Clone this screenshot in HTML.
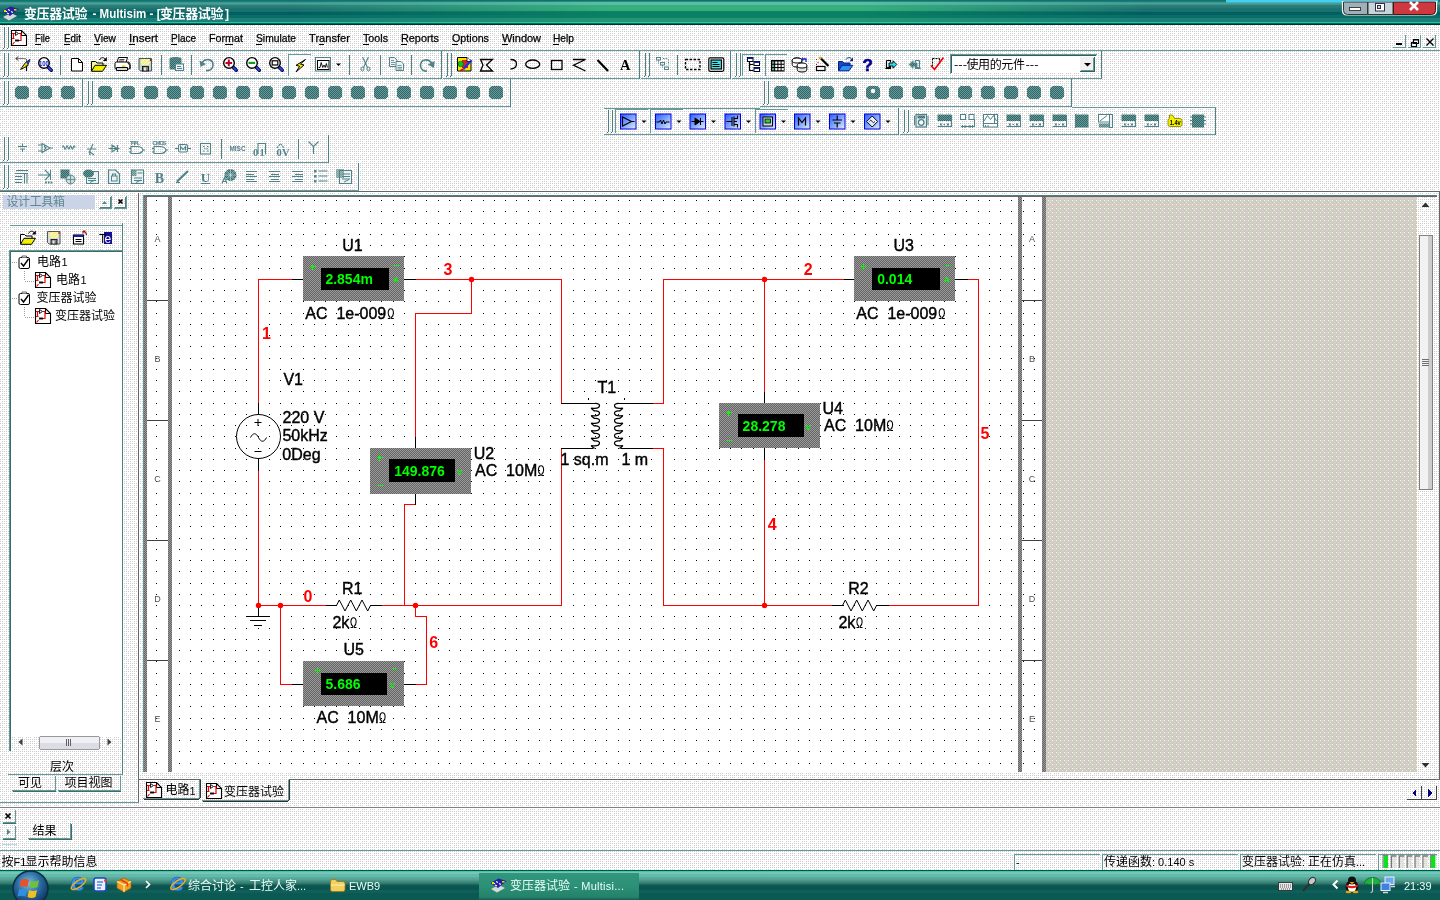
<!DOCTYPE html><html><head><meta charset="utf-8"><title>Multisim</title>
<style>html,body{margin:0;padding:0;background:#f1f1f1;overflow:hidden}svg{display:block;will-change:transform;font-family:"Liberation Sans",sans-serif}text{white-space:pre}</style></head><body>
<svg width="1440" height="900" viewBox="0 0 1440 900">
<defs><pattern id="pd" width="8" height="8" patternUnits="userSpaceOnUse"><rect width="8" height="8" fill="#fff"/><rect x="2" y="1" width="1" height="1" fill="#cccccc"/><rect x="4" y="1" width="1" height="1" fill="#cccccc"/><rect x="6" y="1" width="1" height="1" fill="#cccccc"/><rect x="0" y="3" width="1" height="1" fill="#cccccc"/><rect x="2" y="3" width="1" height="1" fill="#cccccc"/><rect x="4" y="3" width="1" height="1" fill="#cccccc"/><rect x="6" y="3" width="1" height="1" fill="#cccccc"/><rect x="0" y="5" width="1" height="1" fill="#cccccc"/><rect x="2" y="5" width="1" height="1" fill="#cccccc"/><rect x="6" y="5" width="1" height="1" fill="#cccccc"/><rect x="0" y="7" width="1" height="1" fill="#cccccc"/><rect x="2" y="7" width="1" height="1" fill="#cccccc"/><rect x="4" y="7" width="1" height="1" fill="#cccccc"/><rect x="6" y="7" width="1" height="1" fill="#cccccc"/></pattern><pattern id="bd" width="2" height="2" patternUnits="userSpaceOnUse"><rect width="2" height="2" fill="#336666"/><rect width="1" height="1" fill="#669999"/><rect x="1" y="1" width="1" height="1" fill="#669999"/></pattern><pattern id="grid" x="179" y="200" width="45" height="45" patternUnits="userSpaceOnUse"><rect x="0" y="0" width="1" height="1" fill="#000"/><rect x="11" y="0" width="1" height="1" fill="#000"/><rect x="22" y="0" width="1" height="1" fill="#000"/><rect x="34" y="0" width="1" height="1" fill="#000"/><rect x="0" y="11" width="1" height="1" fill="#000"/><rect x="11" y="11" width="1" height="1" fill="#000"/><rect x="22" y="11" width="1" height="1" fill="#000"/><rect x="34" y="11" width="1" height="1" fill="#000"/><rect x="0" y="23" width="1" height="1" fill="#000"/><rect x="11" y="23" width="1" height="1" fill="#000"/><rect x="22" y="23" width="1" height="1" fill="#000"/><rect x="34" y="23" width="1" height="1" fill="#000"/><rect x="0" y="34" width="1" height="1" fill="#000"/><rect x="11" y="34" width="1" height="1" fill="#000"/><rect x="22" y="34" width="1" height="1" fill="#000"/><rect x="34" y="34" width="1" height="1" fill="#000"/></pattern><pattern id="hat" width="2" height="2" patternUnits="userSpaceOnUse"><rect width="2" height="2" fill="#666666"/><rect x="0" y="0" width="1" height="1" fill="#999999"/><rect x="1" y="1" width="1" height="1" fill="#999999"/></pattern><pattern id="wk" width="8" height="8" patternUnits="userSpaceOnUse"><rect width="8" height="8" fill="#cccccc"/><rect x="6" y="6" width="1" height="1" fill="#ffcccc"/><rect x="2" y="6" width="1" height="1" fill="#ffcccc"/><rect x="0" y="0" width="1" height="1" fill="#ffffcc"/><rect x="4" y="0" width="1" height="1" fill="#ffffcc"/><rect x="2" y="0" width="1" height="1" fill="#ffcccc"/><rect x="6" y="2" width="1" height="1" fill="#ffcccc"/><rect x="2" y="2" width="1" height="1" fill="#ffffcc"/><rect x="0" y="4" width="1" height="1" fill="#ffffcc"/><rect x="4" y="4" width="1" height="1" fill="#ffffcc"/><rect x="6" y="4" width="1" height="1" fill="#ffcccc"/><rect x="2" y="5" width="1" height="1" fill="#cccc99"/><rect x="0" y="7" width="1" height="1" fill="#cccc99"/><rect x="4" y="7" width="1" height="1" fill="#cccc99"/><rect x="6" y="1" width="1" height="1" fill="#cccc99"/><rect x="0" y="3" width="1" height="1" fill="#cccc99"/><rect x="4" y="3" width="1" height="1" fill="#cccc99"/></pattern><linearGradient id="task" x1="0" y1="0" x2="0" y2="1"><stop offset="0.017" stop-color="#46c896"/><stop offset="0.052" stop-color="#73c8b9"/><stop offset="0.086" stop-color="#73c8b9"/><stop offset="0.121" stop-color="#64b9aa"/><stop offset="0.155" stop-color="#64b9aa"/><stop offset="0.190" stop-color="#64b9aa"/><stop offset="0.224" stop-color="#5aac9e"/><stop offset="0.259" stop-color="#55a898"/><stop offset="0.293" stop-color="#50a292"/><stop offset="0.328" stop-color="#489888"/><stop offset="0.362" stop-color="#418e80"/><stop offset="0.397" stop-color="#3a8276"/><stop offset="0.431" stop-color="#32766c"/><stop offset="0.466" stop-color="#23645e"/><stop offset="0.500" stop-color="#0c5852"/><stop offset="0.534" stop-color="#0a5550"/><stop offset="0.569" stop-color="#0a5550"/><stop offset="0.603" stop-color="#0a5550"/><stop offset="0.638" stop-color="#0a5550"/><stop offset="0.672" stop-color="#0f5f5a"/><stop offset="0.707" stop-color="#0f5f5a"/><stop offset="0.741" stop-color="#0f5f5a"/><stop offset="0.776" stop-color="#0c5852"/><stop offset="0.810" stop-color="#0c5852"/><stop offset="0.845" stop-color="#0c5852"/><stop offset="0.879" stop-color="#0c5852"/><stop offset="0.914" stop-color="#0a5a50"/><stop offset="0.948" stop-color="#0a5a50"/><stop offset="0.983" stop-color="#0a5a50"/></linearGradient><linearGradient id="tbtn" x1="0" y1="0" x2="0" y2="1"><stop offset="0" stop-color="#32967d"/><stop offset="0.45" stop-color="#2d9178"/><stop offset="0.9" stop-color="#23826a"/><stop offset="1" stop-color="#145a50"/></linearGradient><linearGradient id="tb" x1="0" y1="0" x2="0" y2="1"><stop offset="0.020" stop-color="#147373"/><stop offset="0.060" stop-color="#197d78"/><stop offset="0.100" stop-color="#3c988e"/><stop offset="0.140" stop-color="#46a096"/><stop offset="0.180" stop-color="#3e948c"/><stop offset="0.220" stop-color="#2e7f7a"/><stop offset="0.260" stop-color="#2a7b77"/><stop offset="0.300" stop-color="#267975"/><stop offset="0.340" stop-color="#1c7472"/><stop offset="0.380" stop-color="#197170"/><stop offset="0.420" stop-color="#197170"/><stop offset="0.460" stop-color="#166e6e"/><stop offset="0.500" stop-color="#005f5f"/><stop offset="0.540" stop-color="#005f5f"/><stop offset="0.580" stop-color="#005f5f"/><stop offset="0.620" stop-color="#0c6c68"/><stop offset="0.660" stop-color="#0c6c68"/><stop offset="0.700" stop-color="#0c6c68"/><stop offset="0.740" stop-color="#19807a"/><stop offset="0.780" stop-color="#19807a"/><stop offset="0.820" stop-color="#19807a"/><stop offset="0.860" stop-color="#19807a"/><stop offset="0.900" stop-color="#2dc396"/><stop offset="0.940" stop-color="#00695f"/><stop offset="0.980" stop-color="#003232"/></linearGradient><linearGradient id="tbc" x1="0" y1="0" x2="0" y2="1"><stop offset="0.020" stop-color="#146e6e"/><stop offset="0.060" stop-color="#288c78"/><stop offset="0.100" stop-color="#55bea5"/><stop offset="0.140" stop-color="#55bea5"/><stop offset="0.180" stop-color="#55bea5"/><stop offset="0.220" stop-color="#37af7d"/><stop offset="0.260" stop-color="#37af7d"/><stop offset="0.300" stop-color="#37af7d"/><stop offset="0.340" stop-color="#37af7d"/><stop offset="0.380" stop-color="#37af7d"/><stop offset="0.420" stop-color="#32aa7a"/><stop offset="0.460" stop-color="#0f8466"/><stop offset="0.500" stop-color="#0a8064"/><stop offset="0.540" stop-color="#0a8064"/><stop offset="0.580" stop-color="#0a8064"/><stop offset="0.620" stop-color="#0a8064"/><stop offset="0.660" stop-color="#0a8064"/><stop offset="0.700" stop-color="#0c8266"/><stop offset="0.740" stop-color="#239673"/><stop offset="0.780" stop-color="#239673"/><stop offset="0.820" stop-color="#239673"/><stop offset="0.860" stop-color="#239673"/><stop offset="0.900" stop-color="#2dc896"/><stop offset="0.940" stop-color="#006e64"/><stop offset="0.980" stop-color="#003333"/></linearGradient><linearGradient id="hg" x1="0" y1="0" x2="1" y2="0"><stop offset="0.2" stop-color="#000"/><stop offset="0.42" stop-color="#fff"/><stop offset="0.6" stop-color="#fff"/><stop offset="0.8" stop-color="#000"/></linearGradient><mask id="hm" maskUnits="userSpaceOnUse" x="0" y="0" width="1440" height="25"><rect width="1440" height="25" fill="url(#hg)"/></mask><linearGradient id="bl" x1="0" y1="0" x2="1" y2="1"><stop offset="0" stop-color="#2a5cff"/><stop offset="0.5" stop-color="#7fa4ff"/><stop offset="1" stop-color="#e8f0ff"/></linearGradient></defs>
<g shape-rendering="crispEdges"><rect x="0" y="0" width="1440" height="900" fill="url(#pd)" /><rect x="0" y="0" width="1440" height="25" fill="url(#tb)" /><rect x="0" y="0" width="1440" height="25" fill="url(#tbc)" mask="url(#hm)"/><rect x="0" y="50" width="1440" height="1" fill="#669999" /><rect x="4" y="27" width="1" height="21" fill="#4d8080" /><rect x="8" y="27" width="1" height="21" fill="#4d8080" /><rect x="3" y="48" width="1" height="1" fill="#336699" /><rect x="7" y="48" width="1" height="1" fill="#336699" /><rect x="0" y="78" width="442" height="1" fill="#669999" /><rect x="441" y="51" width="1" height="28" fill="#4d8080" /><rect x="4" y="53" width="1" height="23" fill="#4d8080" /><rect x="8" y="53" width="1" height="23" fill="#4d8080" /><rect x="3" y="76" width="1" height="1" fill="#336699" /><rect x="7" y="76" width="1" height="1" fill="#336699" /><rect x="443" y="78" width="197" height="1" fill="#669999" /><rect x="639" y="51" width="1" height="28" fill="#4d8080" /><rect x="447" y="53" width="1" height="23" fill="#4d8080" /><rect x="451" y="53" width="1" height="23" fill="#4d8080" /><rect x="446" y="76" width="1" height="1" fill="#336699" /><rect x="450" y="76" width="1" height="1" fill="#336699" /><rect x="641" y="78" width="90" height="1" fill="#669999" /><rect x="730" y="51" width="1" height="28" fill="#4d8080" /><rect x="645" y="53" width="1" height="23" fill="#4d8080" /><rect x="649" y="53" width="1" height="23" fill="#4d8080" /><rect x="644" y="76" width="1" height="1" fill="#336699" /><rect x="648" y="76" width="1" height="1" fill="#336699" /><rect x="732" y="78" width="370" height="1" fill="#669999" /><rect x="1101" y="51" width="1" height="28" fill="#4d8080" /><rect x="736" y="53" width="1" height="23" fill="#4d8080" /><rect x="740" y="53" width="1" height="23" fill="#4d8080" /><rect x="735" y="76" width="1" height="1" fill="#336699" /><rect x="739" y="76" width="1" height="1" fill="#336699" /><rect x="60" y="55" width="1" height="20" fill="#4d8080" /><rect x="161" y="55" width="1" height="20" fill="#4d8080" /><rect x="191" y="55" width="1" height="20" fill="#4d8080" /><rect x="349" y="55" width="1" height="20" fill="#4d8080" /><rect x="380" y="55" width="1" height="20" fill="#4d8080" /><rect x="411" y="55" width="1" height="20" fill="#4d8080" /><rect x="677" y="55" width="1" height="20" fill="#4d8080" /><rect x="0" y="106" width="83" height="1" fill="#669999" /><rect x="82" y="79" width="1" height="28" fill="#4d8080" /><rect x="4" y="81" width="1" height="23" fill="#4d8080" /><rect x="8" y="81" width="1" height="23" fill="#4d8080" /><rect x="3" y="104" width="1" height="1" fill="#336699" /><rect x="7" y="104" width="1" height="1" fill="#336699" /><rect x="84" y="106" width="427" height="1" fill="#669999" /><rect x="510" y="79" width="1" height="28" fill="#4d8080" /><rect x="88" y="81" width="1" height="23" fill="#4d8080" /><rect x="92" y="81" width="1" height="23" fill="#4d8080" /><rect x="87" y="104" width="1" height="1" fill="#336699" /><rect x="91" y="104" width="1" height="1" fill="#336699" /><rect x="760" y="106" width="312" height="1" fill="#669999" /><rect x="1071" y="79" width="1" height="28" fill="#4d8080" /><rect x="764" y="81" width="1" height="23" fill="#4d8080" /><rect x="768" y="81" width="1" height="23" fill="#4d8080" /><rect x="763" y="104" width="1" height="1" fill="#336699" /><rect x="767" y="104" width="1" height="1" fill="#336699" /><rect x="604" y="134" width="295" height="1" fill="#669999" /><rect x="898" y="108" width="1" height="27" fill="#4d8080" /><rect x="608" y="110" width="1" height="22" fill="#4d8080" /><rect x="612" y="110" width="1" height="22" fill="#4d8080" /><rect x="607" y="132" width="1" height="1" fill="#336699" /><rect x="611" y="132" width="1" height="1" fill="#336699" /><rect x="900" y="134" width="316" height="1" fill="#669999" /><rect x="1215" y="108" width="1" height="27" fill="#4d8080" /><rect x="904" y="110" width="1" height="22" fill="#4d8080" /><rect x="908" y="110" width="1" height="22" fill="#4d8080" /><rect x="903" y="132" width="1" height="1" fill="#336699" /><rect x="907" y="132" width="1" height="1" fill="#336699" /><rect x="604" y="108" width="156" height="1" fill="#669999" /><rect x="1072" y="107" width="144" height="1" fill="#669999" /><rect x="0" y="162" width="329" height="1" fill="#669999" /><rect x="328" y="135" width="1" height="28" fill="#4d8080" /><rect x="4" y="137" width="1" height="23" fill="#4d8080" /><rect x="8" y="137" width="1" height="23" fill="#4d8080" /><rect x="3" y="160" width="1" height="1" fill="#336699" /><rect x="7" y="160" width="1" height="1" fill="#336699" /><rect x="221" y="139" width="1" height="20" fill="#4d8080" /><rect x="298" y="139" width="1" height="20" fill="#4d8080" /><rect x="0" y="190" width="359" height="1" fill="#669999" /><rect x="358" y="163" width="1" height="28" fill="#4d8080" /><rect x="4" y="165" width="1" height="23" fill="#4d8080" /><rect x="8" y="165" width="1" height="23" fill="#4d8080" /><rect x="3" y="188" width="1" height="1" fill="#336699" /><rect x="7" y="188" width="1" height="1" fill="#336699" /><rect x="1393" y="47" width="13" height="1" fill="#669999" /><rect x="1405" y="35" width="1" height="13" fill="#669999" /><rect x="1408" y="47" width="13" height="1" fill="#669999" /><rect x="1420" y="35" width="1" height="13" fill="#669999" /><rect x="1423" y="47" width="13" height="1" fill="#669999" /><rect x="1435" y="35" width="1" height="13" fill="#669999" /><rect x="3" y="195" width="92" height="14" fill="#cbd3e6" /><rect x="99" y="208" width="13" height="1" fill="#669999" /><rect x="111" y="196" width="1" height="13" fill="#669999" /><rect x="100" y="207" width="11" height="1" fill="#4d8080" /><rect x="110" y="197" width="1" height="11" fill="#4d8080" /><rect x="114" y="208" width="13" height="1" fill="#669999" /><rect x="126" y="196" width="1" height="13" fill="#669999" /><rect x="115" y="207" width="11" height="1" fill="#4d8080" /><rect x="125" y="197" width="1" height="11" fill="#4d8080" /><rect x="138" y="193" width="1" height="610" fill="#666666" /><rect x="0" y="802" width="139" height="1" fill="#669999" /><rect x="10" y="225" width="112" height="1" fill="#669999" /><rect x="122" y="223" width="1" height="552" fill="#4d8080" /><rect x="8" y="774" width="115" height="1" fill="#669999" /><rect x="11" y="252" width="110" height="484" fill="#fff" /><rect x="9" y="250" width="113" height="1" fill="#669999" /><rect x="9" y="251" width="113" height="1" fill="#3c6c6c" /><rect x="9" y="250" width="1" height="501" fill="#669999" /><rect x="10" y="251" width="1" height="500" fill="#3c6c6c" /><rect x="11" y="736" width="110" height="14" fill="url(#pd)" /><rect x="39" y="736" width="61" height="13" fill="#f0f0f4" /><rect x="40" y="743" width="59" height="6" fill="#dcdce4" /><rect x="40" y="736" width="59" height="1" fill="#999999" /><rect x="40" y="749" width="59" height="1" fill="#999999" /><rect x="39" y="737" width="1" height="12" fill="#999999" /><rect x="99" y="737" width="1" height="12" fill="#999999" /><rect x="66" y="739" width="1" height="7" fill="#606060" /><rect x="68" y="739" width="1" height="7" fill="#606060" /><rect x="70" y="739" width="1" height="7" fill="#606060" /><rect x="12" y="790" width="44" height="1" fill="#669999" /><rect x="13" y="791" width="43" height="1" fill="#3c6c6c" /><rect x="55" y="776" width="1" height="15" fill="#669999" /><rect x="58" y="790" width="63" height="1" fill="#669999" /><rect x="59" y="791" width="62" height="1" fill="#3c6c6c" /><rect x="120" y="776" width="1" height="15" fill="#669999" /><rect x="0" y="190" width="359" height="1" fill="#669999" /><rect x="0" y="191" width="1440" height="1" fill="#666666" /><rect x="1439" y="191" width="1" height="589" fill="#666666" /><rect x="143" y="195" width="1294" height="1" fill="#4c8080" /><rect x="144" y="196" width="1293" height="1" fill="#666666" /><rect x="147" y="197" width="871" height="575" fill="#fff" /><rect x="144" y="197" width="3" height="575" fill="url(#hat)" /><rect x="143" y="195" width="1" height="577" fill="#669999" /><rect x="168" y="197" width="4" height="575" fill="url(#hat)" /><rect x="1018" y="197" width="4" height="575" fill="url(#hat)" /><rect x="1022" y="197" width="20" height="575" fill="#fff" /><rect x="1042" y="197" width="4" height="575" fill="url(#hat)" /><rect x="1046" y="197" width="371" height="575" fill="url(#wk)" /><rect x="147" y="197" width="21" height="575" fill="url(#grid)" /><rect x="172" y="197" width="846" height="575" fill="url(#grid)" /><rect x="1022" y="197" width="20" height="575" fill="url(#grid)" /><rect x="147" y="300" width="21" height="1" fill="#404040" /><rect x="1022" y="300" width="20" height="1" fill="#404040" /><rect x="147" y="420" width="21" height="1" fill="#404040" /><rect x="1022" y="420" width="20" height="1" fill="#404040" /><rect x="147" y="540" width="21" height="1" fill="#404040" /><rect x="1022" y="540" width="20" height="1" fill="#404040" /><rect x="147" y="660" width="21" height="1" fill="#404040" /><rect x="1022" y="660" width="20" height="1" fill="#404040" /><rect x="1417" y="197" width="18" height="575" fill="url(#pd)" /><rect x="1419" y="235" width="14" height="255" fill="#f2f2f2" /><rect x="1419" y="235" width="14" height="1" fill="#808080" /><rect x="1419" y="489" width="14" height="1" fill="#808080" /><rect x="1419" y="235" width="1" height="255" fill="#808080" /><rect x="1432" y="235" width="1" height="255" fill="#808080" /><rect x="1428" y="236" width="4" height="253" fill="#cccccc" /><rect x="1422" y="359" width="7" height="1" fill="#707070" /><rect x="1422" y="361" width="7" height="1" fill="#707070" /><rect x="1422" y="363" width="7" height="1" fill="#707070" /><rect x="1422" y="365" width="7" height="1" fill="#707070" /><rect x="139" y="779" width="1301" height="1" fill="#666666" /><rect x="0" y="807" width="1440" height="1" fill="#808080" /><rect x="258" y="279" width="35" height="1" fill="#ff0000" /><rect x="258" y="279" width="1" height="125" fill="#ff0000" /><rect x="258" y="470" width="1" height="136" fill="#ff0000" /><rect x="258" y="605" width="69" height="1" fill="#ff0000" /><rect x="381" y="605" width="181" height="1" fill="#ff0000" /><rect x="561" y="448" width="1" height="158" fill="#ff0000" /><rect x="415" y="279" width="147" height="1" fill="#ff0000" /><rect x="561" y="279" width="1" height="125" fill="#ff0000" /><rect x="471" y="279" width="1" height="35" fill="#ff0000" /><rect x="415" y="313" width="57" height="1" fill="#ff0000" /><rect x="415" y="313" width="1" height="125" fill="#ff0000" /><rect x="415" y="504" width="1" height="1" fill="#ff0000" /><rect x="404" y="504" width="12" height="1" fill="#ff0000" /><rect x="404" y="504" width="1" height="102" fill="#ff0000" /><rect x="415" y="605" width="1" height="12" fill="#ff0000" /><rect x="415" y="616" width="12" height="1" fill="#ff0000" /><rect x="426" y="616" width="1" height="69" fill="#ff0000" /><rect x="415" y="684" width="12" height="1" fill="#ff0000" /><rect x="280" y="605" width="1" height="80" fill="#ff0000" /><rect x="280" y="684" width="13" height="1" fill="#ff0000" /><rect x="652" y="403" width="12" height="1" fill="#ff0000" /><rect x="663" y="279" width="1" height="125" fill="#ff0000" /><rect x="663" y="279" width="182" height="1" fill="#ff0000" /><rect x="652" y="448" width="12" height="1" fill="#ff0000" /><rect x="663" y="448" width="1" height="158" fill="#ff0000" /><rect x="663" y="605" width="170" height="1" fill="#ff0000" /><rect x="888" y="605" width="91" height="1" fill="#ff0000" /><rect x="978" y="279" width="1" height="327" fill="#ff0000" /><rect x="967" y="279" width="12" height="1" fill="#ff0000" /><rect x="764" y="279" width="1" height="114" fill="#ff0000" /><rect x="764" y="459" width="1" height="147" fill="#ff0000" /><rect x="292" y="279" width="12" height="1" fill="#000" /><rect x="404" y="279" width="12" height="1" fill="#000" /><rect x="258" y="403" width="1" height="12" fill="#000" /><rect x="258" y="458" width="1" height="13" fill="#000" /><rect x="415" y="437" width="1" height="12" fill="#000" /><rect x="415" y="493" width="1" height="12" fill="#000" /><rect x="326" y="605" width="11" height="1" fill="#000" /><rect x="371" y="605" width="11" height="1" fill="#000" /><rect x="292" y="684" width="12" height="1" fill="#000" /><rect x="404" y="684" width="12" height="1" fill="#000" /><rect x="561" y="403" width="34" height="1" fill="#000" /><rect x="561" y="448" width="32" height="1" fill="#000" /><rect x="619" y="403" width="34" height="1" fill="#000" /><rect x="621" y="448" width="32" height="1" fill="#000" /><rect x="844" y="279" width="11" height="1" fill="#000" /><rect x="955" y="279" width="13" height="1" fill="#000" /><rect x="764" y="392" width="1" height="12" fill="#000" /><rect x="764" y="448" width="1" height="12" fill="#000" /><rect x="832" y="605" width="11" height="1" fill="#000" /><rect x="877" y="605" width="12" height="1" fill="#000" /><rect x="258" y="605" width="1" height="12" fill="#000" /><rect x="246" y="616" width="24" height="1" fill="#000" /><rect x="250" y="620" width="16" height="1" fill="#000" /><rect x="254" y="625" width="8" height="1" fill="#000" /><rect x="303" y="256" width="101" height="45" fill="url(#hat)" /><rect x="321" y="268" width="68" height="22" fill="#000" /><rect x="854" y="256" width="101" height="45" fill="url(#hat)" /><rect x="872" y="268" width="68" height="22" fill="#000" /><rect x="370" y="448" width="101" height="46" fill="url(#hat)" /><rect x="389" y="459" width="66" height="23" fill="#000" /><rect x="719" y="403" width="101" height="45" fill="url(#hat)" /><rect x="738" y="414" width="66" height="23" fill="#000" /><rect x="303" y="661" width="101" height="45" fill="url(#hat)" /><rect x="321" y="673" width="66" height="22" fill="#000" /></g><g><polyline points="336.5,605.5 339.3,600 345.0,611 350.7,600 356.3,611 362.0,600 367.7,611 370.5,605.5" fill="none" stroke="#000" stroke-width="1" /><polyline points="842.5,605.5 845.3,600 851.0,611 856.7,600 862.3,611 868.0,600 873.7,611 876.5,605.5" fill="none" stroke="#000" stroke-width="1" /><circle cx="471.5" cy="279.5" r="2.7" fill="#ff0000"/><circle cx="258.5" cy="605.5" r="2.7" fill="#ff0000"/><circle cx="280.5" cy="605.5" r="2.7" fill="#ff0000"/><circle cx="415.5" cy="605.5" r="2.7" fill="#ff0000"/><circle cx="764.5" cy="279.5" r="2.7" fill="#ff0000"/><circle cx="764.5" cy="605.5" r="2.7" fill="#ff0000"/><circle cx="258.5" cy="436.5" r="22" fill="none" stroke="#000" stroke-width="1"/><path d="M254.5 422.5h7M258 419v7M254.5 451.5h7" stroke="#000" fill="none"/><path d="M250.5 437.5c2.5-5 5.5-5 8 0s5.500 5 8 0" stroke="#000" fill="none"/><path d="M594.5 403.5C601.5 402.5,601.5 409.125,592.5 408.15C589.5 407.625,593.5 410.25,594.5 411.0C601.5 410.0,601.5 416.625,592.5 415.65C589.5 415.125,593.5 417.75,594.5 418.5C601.5 417.5,601.5 424.125,592.5 423.15C589.5 422.625,593.5 425.25,594.5 426.0C601.5 425.0,601.5 431.625,592.5 430.65C589.5 430.125,593.5 432.75,594.5 433.5C601.5 432.5,601.5 439.125,592.5 438.15C589.5 437.625,593.5 440.25,594.5 441.0C601.5 440.0,601.5 446.625,592.5 445.65C589.5 445.125,593.5 447.75,594.5 448.5" stroke="#000" fill="none" stroke-width="1.250"/><path d="M619.5 403.5C612.5 402.5,612.5 409.125,621.5 408.15C624.5 407.625,620.5 410.25,619.5 411.0C612.5 410.0,612.5 416.625,621.5 415.65C624.5 415.125,620.5 417.75,619.5 418.5C612.5 417.5,612.5 424.125,621.5 423.15C624.5 422.625,620.5 425.25,619.5 426.0C612.5 425.0,612.5 431.625,621.5 430.65C624.5 430.125,620.5 432.75,619.5 433.5C612.5 432.5,612.5 439.125,621.5 438.15C624.5 437.625,620.5 440.25,619.5 441.0C612.5 440.0,612.5 446.625,621.5 445.65C624.5 445.125,620.5 447.75,619.5 448.5" stroke="#000" fill="none" stroke-width="1.250"/><rect x="588" y="398" width="1" height="2" fill="#000" /><rect x="624" y="398" width="1" height="2" fill="#000" /></g><g shape-rendering="crispEdges"><rect x="201" y="779" width="88" height="1" fill="url(#pd)" /><rect x="200" y="780" width="1" height="18" fill="#333333" /><rect x="199" y="780" width="1" height="18" fill="#669999" /><rect x="144" y="799" width="55" height="1" fill="#333333" /><rect x="143" y="798" width="57" height="1" fill="#669999" /><rect x="199" y="798" width="1" height="1" fill="#333333" /><rect x="289" y="780" width="1" height="20" fill="#333333" /><rect x="288" y="780" width="1" height="20" fill="#669999" /><rect x="203" y="801" width="85" height="1" fill="#333333" /><rect x="202" y="800" width="87" height="1" fill="#669999" /><rect x="288" y="800" width="1" height="1" fill="#333333" /><rect x="1421" y="786" width="1" height="14" fill="#404040" /><rect x="1436" y="786" width="1" height="14" fill="#404040" /><rect x="1407" y="799" width="30" height="1" fill="#404040" /><path d="M1416 789v8l-4-4zM1428 789v8l4-4z" fill="#000080"/><rect x="3" y="822" width="13" height="1" fill="#669999" /><rect x="15" y="810" width="1" height="13" fill="#669999" /><rect x="3" y="823" width="13" height="1" fill="#3c6c6c" /><rect x="3" y="838" width="13" height="1" fill="#669999" /><rect x="15" y="826" width="1" height="13" fill="#669999" /><rect x="3" y="839" width="13" height="1" fill="#3c6c6c" /><rect x="28" y="838" width="43" height="1" fill="#669999" /><rect x="29" y="839" width="42" height="1" fill="#3c6c6c" /><rect x="70" y="823" width="1" height="16" fill="#669999" /><rect x="71" y="824" width="1" height="16" fill="#3c6c6c" /><rect x="2" y="844" width="15" height="1" fill="#b8d8e8" /><rect x="0" y="850" width="1440" height="1" fill="#669999" /><rect x="1014" y="854" width="86" height="1" fill="#669999" /><rect x="1014" y="854" width="1" height="16" fill="#669999" /><rect x="1102" y="854" width="136" height="1" fill="#669999" /><rect x="1102" y="854" width="1" height="16" fill="#669999" /><rect x="1240" y="854" width="136" height="1" fill="#669999" /><rect x="1240" y="854" width="1" height="16" fill="#669999" /><rect x="1378" y="854" width="59" height="1" fill="#669999" /><rect x="1378" y="854" width="1" height="16" fill="#669999" /><rect x="0" y="871" width="1440" height="29" fill="url(#task)" /><rect x="0" y="870" width="1440" height="1" fill="#005555" /><rect x="479" y="873" width="160" height="27" fill="url(#tbtn)" /></g><g><g transform="translate(15 56)" ><path d="M1.500 2.500h8.500q1.500 0 1.500 2v2" stroke="#000" stroke-dasharray="1 1" fill="none"/><path d="M3 .5l-2 2 2 2" stroke="#000" fill="none"/><path d="M15 3.500l-2.500 6.500-7 3.500 5-7z" fill="#e8e000" stroke="#000" stroke-width=".9"/><path d="M15 3.500l-2.200 5.300-1.800-2.500z" fill="#2030e0"/><path d="M11.500 9.500v5.500" stroke="#000" stroke-width="1.200"/></g><g transform="translate(37 56)" ><path d="M10.500 10.500l3.800 3.800" stroke="#000060" stroke-width="3.400" stroke-linecap="round"/><path d="M10.800 10.800l3.300 3.300" stroke="#3050e0" stroke-width="1.600" stroke-linecap="round"/><circle cx="7" cy="6.900" r="5.300" fill="#fff" stroke="#000" stroke-width="1.400"/><text x="6.900" y="9.500" font-size="7.500" font-weight="bold" fill="#1020c0" text-anchor="middle" textLength="10" lengthAdjust="spacingAndGlyphs">100</text></g><g transform="translate(71 56)" ><path d="M.5 2.500h7l4 4v8.500h-11z" fill="#fff" stroke="#000"/><path d="M7.500 2.500v4h4" fill="none" stroke="#000"/></g><g transform="translate(91 56)" ><path d="M.5 15v-9.500h4l1.500 1.500h6v3" fill="#f8f890" stroke="#000"/><path d="M.5 15.300l3.500-6h11.500l-4 6z" fill="#f0f000" stroke="#000"/><path d="M8.500 4c1.500-3 4.500-3 6-.5" fill="none" stroke="#000"/><path d="M15.800 1v4h-4z" fill="#000"/></g><g transform="translate(114 56)" ><path d="M4.500 1.500h9l-1.500 5h-9z" fill="#fff" stroke="#000"/><path d="M5.500 3.500h5M5 5h5" stroke="#000" stroke-width=".7"/><path d="M1 7.500q0-1.500 1.500-1.500h11q2.500 0 2.500 2v4q0 1-1 1h-13q-1 0-1-1z" fill="#fff" stroke="#000"/><path d="M2.500 11.500h11v3h-11z" fill="#d8d8d8" stroke="#000"/><rect x="8" y="9.500" width="3.500" height="1.500" fill="#e0d000"/><path d="M13.500 6.500l2.500 3v3.500" stroke="#000" fill="none"/></g><g transform="translate(138 56)" ><path d="M1 2.500h12.500v12.500h-11l-1.500-1.500z" fill="#c8d0d0" stroke="#3c5c60"/><rect x="3" y="3" width="8.500" height="6" fill="#f4f080"/><path d="M3 7l4-4M5 9l6-6M8.500 9l3-3" stroke="#fff" stroke-width=".8"/><rect x="4.500" y="10.500" width="6" height="4.500" fill="#808080" stroke="#000" stroke-width=".8"/><rect x="6" y="11.500" width="2" height="3" fill="#e8e8e8"/><rect x="12" y="3" width="1" height="2" fill="#e00000"/></g><g transform="translate(168 56)" ><path d="M1.500 3q0-1.500 1.500-1.500h9q1.500 0 1.500 1.500v9q0 1.500-1.500 1.500h-9q-1.500 0-1.500-1.500z" fill="url(#bd)"/><rect x="5" y="1" width="5" height="2.500" fill="#4f8389"/><rect x="7.500" y="8" width="8" height="6.500" fill="#eef2f2" stroke="#4f8389"/><path d="M9 10.500h4M9 12.500h5" stroke="#4f8389"/></g><g transform="translate(199 56)" ><path d="M3 6.500c4-5 11-3.500 11 2.500 0 4-3 6-7 5.500" fill="none" stroke="#4f8389" stroke-width="1.600"/><path d="M.5 4.500l1 6.500 5.500-3z" fill="#4f8389"/></g><g transform="translate(222 56)" ><path d="M10.500 10.500l3.800 3.800" stroke="#000060" stroke-width="3.400" stroke-linecap="round"/><path d="M10.800 10.800l3.300 3.300" stroke="#3050e0" stroke-width="1.600" stroke-linecap="round"/><circle cx="7" cy="6.900" r="5.300" fill="#fff" stroke="#000" stroke-width="1.400"/><path d="M3.500 6.900h6.600M6.800 3.600v6.600" stroke="#c00028" stroke-width="2"/></g><g transform="translate(245 56)" ><path d="M10.500 10.500l3.800 3.800" stroke="#000060" stroke-width="3.400" stroke-linecap="round"/><path d="M10.800 10.800l3.300 3.300" stroke="#3050e0" stroke-width="1.600" stroke-linecap="round"/><circle cx="7" cy="6.900" r="5.300" fill="#fff" stroke="#000" stroke-width="1.400"/><path d="M3.500 6.900h6.600" stroke="#10a020" stroke-width="2.200"/></g><g transform="translate(268 56)" ><path d="M10.500 10.500l3.800 3.800" stroke="#000060" stroke-width="3.400" stroke-linecap="round"/><path d="M10.800 10.800l3.300 3.300" stroke="#3050e0" stroke-width="1.600" stroke-linecap="round"/><circle cx="7" cy="6.900" r="5.300" fill="#fff" stroke="#000" stroke-width="1.400"/><rect x="4.200" y="4.800" width="5.600" height="4.200" fill="none" stroke="#000" stroke-width="1.200"/></g><g shape-rendering="crispEdges"><rect x="289" y="55" width="21" height="21" fill="#fff" opacity=".75"/><rect x="288" y="54" width="23" height="1" fill="#669999"/><rect x="288" y="54" width="1" height="22" fill="#669999"/></g><g transform="translate(291 56)" ><path d="M14.500 3.500L5 9.300l3.600 1-3.600 5.700 8-7-3.500-1z" fill="#f8f000" stroke="#000" stroke-width="1" stroke-linejoin="round"/></g><g transform="translate(315 56)" ><rect x=".5" y="1.500" width="15" height="13.500" fill="#f4f8f8" stroke="#4f8389" stroke-width="1"/><rect x="2.500" y="4.500" width="11.500" height="9" fill="#fff" stroke="#000" stroke-width="1"/><path d="M3.500 11.500h1.500l1.200-5 1.500 5 1.300-2.500 1.200 2.500 1.200-4 1 4" fill="none" stroke="#000" stroke-width=".9"/></g><path d="M336 63.500h5l-2.500 2.500z" fill="#000"/><g transform="translate(357 56)" ><path d="M5.500 1l5 10.500M11.500 1l-5 10.500" stroke="#4f8389" stroke-width="1.100" fill="none"/><ellipse cx="5.500" cy="13" rx="1.500" ry="2" fill="none" stroke="#4f8389"/><ellipse cx="11.500" cy="13" rx="1.500" ry="2" fill="none" stroke="#4f8389"/></g><g transform="translate(388 56)" ><path d="M1.500 1.500h5l2.500 2.500v6.500h-7.500z" fill="#eef2f2" stroke="#4f8389"/><path d="M3 4.500h3M3 6.500h4M3 8.500h4" stroke="#4f8389" stroke-width=".8"/><path d="M8 5.500h5l2.500 2.500v6.500h-7.500z" fill="#eef2f2" stroke="#4f8389"/><path d="M9.500 9.500h4M9.500 11.500h4.500M9.500 13h4.500" stroke="#4f8389" stroke-width=".8"/></g><g transform="translate(419 56)" ><path d="M13 7.500c-4-6-11.500-4-11.500 2 0 4 3 6 6.500 5.500" fill="none" stroke="#4f8389" stroke-width="1.600"/><path d="M15.800 5l-1 7-6-3.500z" fill="#4f8389"/></g><g transform="translate(456 56)" ><path d="M1.500 1.500h9.500l4 4v9.500h-13.500z" fill="#f8e800" stroke="#000"/><rect x="6" y="4" width="6" height="8" fill="#e02020"/><circle cx="4.800" cy="8" r="2.800" fill="#10c020" stroke="#006000" stroke-width=".6"/><path d="M15.500 4l-8 9" stroke="#1030ff" stroke-width="2.200"/><path d="M7.500 13l-3 1.500" stroke="#e00000" stroke-width="1.500"/><path d="M11 1.500v4h4" fill="#fff" stroke="#000" stroke-width=".8"/></g><g transform="translate(478 56)" ><path d="M2.500 3.500h12l-6 5.500 6 6h-12l2.500-6z" fill="none" stroke="#000" stroke-width="1.300" stroke-linejoin="miter"/></g><g transform="translate(502 56)" ><path d="M8.500 3.500c8 0 8 8.500 0 9.500" fill="none" stroke="#000" stroke-width="1.300"/></g><g transform="translate(524 56)" ><ellipse cx="8.700" cy="8.200" rx="7" ry="4.200" fill="none" stroke="#000" stroke-width="1.300"/></g><g transform="translate(548 56)" ><rect x="3.500" y="4.500" width="10.500" height="9" fill="none" stroke="#000" stroke-width="1.300"/></g><g transform="translate(571 56)" ><path d="M2 3.500h12.500l-12 5.700 12 5.800" fill="none" stroke="#000" stroke-width="1.300"/></g><g transform="translate(595 56)" ><path d="M2.500 4l10.500 11" stroke="#000" stroke-width="2.200"/></g><text x="625.200" y="69.800" font-family="Liberation Serif" font-weight="bold" font-size="14.500" text-anchor="middle" fill="#000">A</text><g transform="translate(655 56)" ><rect x="1.500" y="1.500" width="4" height="2.500" fill="none" stroke="#4f8389"/><rect x="5.500" y="6.500" width="4" height="2.500" fill="none" stroke="#4f8389"/><rect x="9.500" y="11" width="4" height="2.500" fill="none" stroke="#4f8389"/><path d="M8 2.500h3.500q2 0 2 2v4M3.500 4v3.500M7.500 9v3" stroke="#4f8389" fill="none" stroke-dasharray="1.500 1"/></g><g transform="translate(684 56)" ><rect x="1.500" y="3.500" width="14.500" height="10" fill="none" stroke="#000" stroke-width="1.300" stroke-dasharray="2.500 1.500"/></g><g transform="translate(708 56)" ><rect x=".8" y="1.800" width="15" height="13.500" rx="1.500" fill="#fff" stroke="#000" stroke-width="1.200"/><rect x="3" y="4" width="10.500" height="9" fill="#40e0e8" stroke="#000" stroke-width="1.200"/><path d="M4.500 6.500h5M4.500 8.500h7M4.500 10.500h7" stroke="#000" stroke-width="1.100"/></g><g shape-rendering="crispEdges"><rect x="742" y="54" width="22" height="1" fill="#669999"/><rect x="742" y="54" width="1" height="22" fill="#669999"/><rect x="765" y="54" width="22" height="1" fill="#669999"/><rect x="765" y="54" width="1" height="22" fill="#669999"/></g><g transform="translate(745 56)" ><path d="M4.500 5v9.500h4M4.500 8.500h4" fill="none" stroke="#000" stroke-width="1.200"/><rect x="2.5" y="1.5" width="5.500" height="4" fill="#fff" stroke="#000"/><rect x="2.5" y="1.5" width="5.500" height="1.500" fill="#1020c0"/><rect x="9" y="5.5" width="5.500" height="4" fill="#fff" stroke="#000"/><rect x="9" y="5.5" width="5.500" height="1.500" fill="#1020c0"/><rect x="9" y="11.5" width="5.500" height="4" fill="#fff" stroke="#000"/><rect x="9" y="11.5" width="5.500" height="1.500" fill="#1020c0"/></g><g transform="translate(770 56)" ><rect x="1" y="4" width="13.500" height="11.500" fill="#000"/><rect x="2.0" y="5.5" width="2.200" height="2.200" fill="#5f9fa0"/><rect x="2.0" y="8.8" width="2.200" height="2.200" fill="#5f9fa0"/><rect x="2.0" y="12.1" width="2.200" height="2.200" fill="#5f9fa0"/><rect x="5.2" y="5.5" width="2.200" height="2.200" fill="#fff"/><rect x="5.2" y="8.8" width="2.200" height="2.200" fill="#fff"/><rect x="5.2" y="12.1" width="2.200" height="2.200" fill="#fff"/><rect x="8.4" y="5.5" width="2.200" height="2.200" fill="#fff"/><rect x="8.4" y="8.8" width="2.200" height="2.200" fill="#fff"/><rect x="8.4" y="12.1" width="2.200" height="2.200" fill="#fff"/><rect x="11.6" y="5.5" width="2.200" height="2.200" fill="#fff"/><rect x="11.6" y="8.8" width="2.200" height="2.200" fill="#fff"/><rect x="11.6" y="12.1" width="2.200" height="2.200" fill="#fff"/></g><g transform="translate(791 56)" ><ellipse cx="6" cy="4.500" rx="4.800" ry="2.500" fill="#fff" stroke="#000"/><path d="M1.200 4.500v4q0 2.500 4.800 2.500t4.800-2.500v-4" fill="#fff" stroke="#000"/><ellipse cx="6" cy="4.500" rx="4.800" ry="2.500" fill="#fff" stroke="#000"/><path d="M6.200 9.500v4q0 2.500 4.800 2.500t4.800-2.500v-4" fill="#dfe8e8" stroke="#000"/><ellipse cx="11" cy="9.500" rx="4.800" ry="2.500" fill="#fff" stroke="#000"/><path d="M12 3h3v3" fill="none" stroke="#1020c0" stroke-width="1.300"/><path d="M11.500 1l-1.500 2.200 2.500 1.800z" fill="#1020c0"/></g><g transform="translate(814 56)" ><rect x="2.500" y="10.500" width="8.500" height="4" fill="#fff" stroke="#000" stroke-width="1.200"/><path d="M6 1.500l8.500 8.500" stroke="#000" stroke-width="2.200"/><path d="M5.500 1l1.800 1.800" stroke="#e0c000" stroke-width="2"/><path d="M2.500 3v1M4 6v1M2.500 8v1" stroke="#e00000" stroke-width="1"/></g><g transform="translate(837 56)" ><path d="M1.500 14.500v-9h4l1.500 1.500h6v3" fill="#1848c8" stroke="#002080"/><path d="M1.500 14.800l3.500-5.500h10.800l-3.800 5.500z" fill="#2890f8" stroke="#002080"/><path d="M9 3.500c1.500-2.500 4.500-2.500 6 0" fill="none" stroke="#002080"/><path d="M16 1.500v3.800h-3.500z" fill="#002080"/></g><text x="867.800" y="71" font-weight="bold" font-size="17" text-anchor="middle" fill="#000090" stroke="#000090" stroke-width=".6">?</text><g transform="translate(884 56)" ><path d="M2.500 4.500h4v2M6.500 10v2.500h-4z" fill="none" stroke="#000" stroke-width="1.200"/><path d="M2.500 4.500v8" stroke="#000" stroke-width="1.200"/><path d="M5 7h4v-2.300l3.800 3.800-3.800 3.800v-2.300h-4z" fill="#20e0f0" stroke="#000" stroke-width=".9"/></g><g transform="translate(906 56)" ><path d="M13.500 4.500h-4v2M9.500 10v2.500h4z" fill="none" stroke="#4f8389" stroke-width="1.200"/><path d="M13.500 4.500v8" stroke="#4f8389" stroke-width="1.200"/><path d="M11 7h-4v-2.300l-3.800 3.800 3.800 3.800v-2.300h4z" fill="url(#bd)" stroke="#4f8389" stroke-width=".9"/></g><g transform="translate(929 56)" ><path d="M3.500 2.500h7M3.500 2.500v7.500M10.500 2.500v6" stroke="#000" stroke-width="1.100" fill="none" stroke-dasharray="2 1"/><path d="M2 9.500l3.500 4 9-12" fill="none" stroke="#f00000" stroke-width="1.700"/></g><g shape-rendering="crispEdges"><rect x="951" y="55" width="145" height="18" fill="#fff"/><rect x="950" y="54" width="147" height="1" fill="#669999"/><rect x="950" y="54" width="1" height="20" fill="#669999"/><rect x="951" y="55" width="145" height="1" fill="#2f5f5f"/><rect x="951" y="55" width="1" height="18" fill="#2f5f5f"/><rect x="1080" y="57" width="15" height="15" fill="#f1f1f1"/><rect x="1080" y="71" width="15" height="1" fill="#2f5f5f"/><rect x="1094" y="57" width="1" height="15" fill="#2f5f5f"/><rect x="1081" y="70" width="13" height="1" fill="#669999"/><rect x="1093" y="58" width="1" height="13" fill="#669999"/></g><path d="M1084 63h7l-3.500 3.500z" fill="#000"/><text x="954" y="68" font-size="11" fill="#000" font-family="Liberation Sans" textLength="13" lengthAdjust="spacingAndGlyphs">---</text><text x="966.5" y="68.64" font-size="12" fill="#000" font-family="'Liberation Sans','Noto Sans CJK SC',sans-serif" textLength="58.5" lengthAdjust="spacing">使用的元件</text><text x="1025.5" y="68" font-size="11" fill="#000" font-family="Liberation Sans" textLength="13" lengthAdjust="spacingAndGlyphs">---</text><g transform="translate(15 86)" ><path d="M2.5 0h9.0l2.5 2.5v8.0l-2.5 2.5h-9.0l-2.5-2.5v-8.0z" fill="url(#bd)"/></g><g transform="translate(38 86)" ><path d="M2.5 0h9.0l2.5 2.5v8.0l-2.5 2.5h-9.0l-2.5-2.5v-8.0z" fill="url(#bd)"/></g><g transform="translate(61 86)" ><path d="M2.5 0h9.0l2.5 2.5v8.0l-2.5 2.5h-9.0l-2.5-2.5v-8.0z" fill="url(#bd)"/></g><g transform="translate(98 86)" ><path d="M2.5 0h9.0l2.5 2.5v8.0l-2.5 2.5h-9.0l-2.5-2.5v-8.0z" fill="url(#bd)"/></g><g transform="translate(121 86)" ><path d="M2.5 0h9.0l2.5 2.5v8.0l-2.5 2.5h-9.0l-2.5-2.5v-8.0z" fill="url(#bd)"/></g><g transform="translate(144 86)" ><path d="M2.5 0h9.0l2.5 2.5v8.0l-2.5 2.5h-9.0l-2.5-2.5v-8.0z" fill="url(#bd)"/></g><g transform="translate(167 86)" ><path d="M2.5 0h9.0l2.5 2.5v8.0l-2.5 2.5h-9.0l-2.5-2.5v-8.0z" fill="url(#bd)"/></g><g transform="translate(190 86)" ><path d="M2.5 0h9.0l2.5 2.5v8.0l-2.5 2.5h-9.0l-2.5-2.5v-8.0z" fill="url(#bd)"/></g><g transform="translate(213 86)" ><path d="M2.5 0h9.0l2.5 2.5v8.0l-2.5 2.5h-9.0l-2.5-2.5v-8.0z" fill="url(#bd)"/></g><g transform="translate(236 86)" ><path d="M2.5 0h9.0l2.5 2.5v8.0l-2.5 2.5h-9.0l-2.5-2.5v-8.0z" fill="url(#bd)"/></g><g transform="translate(259 86)" ><path d="M2.5 0h9.0l2.5 2.5v8.0l-2.5 2.5h-9.0l-2.5-2.5v-8.0z" fill="url(#bd)"/></g><g transform="translate(282 86)" ><path d="M2.5 0h9.0l2.5 2.5v8.0l-2.5 2.5h-9.0l-2.5-2.5v-8.0z" fill="url(#bd)"/></g><g transform="translate(305 86)" ><path d="M2.5 0h9.0l2.5 2.5v8.0l-2.5 2.5h-9.0l-2.5-2.5v-8.0z" fill="url(#bd)"/></g><g transform="translate(328 86)" ><path d="M2.5 0h9.0l2.5 2.5v8.0l-2.5 2.5h-9.0l-2.5-2.5v-8.0z" fill="url(#bd)"/></g><g transform="translate(351 86)" ><path d="M2.5 0h9.0l2.5 2.5v8.0l-2.5 2.5h-9.0l-2.5-2.5v-8.0z" fill="url(#bd)"/></g><g transform="translate(374 86)" ><path d="M2.5 0h9.0l2.5 2.5v8.0l-2.5 2.5h-9.0l-2.5-2.5v-8.0z" fill="url(#bd)"/></g><g transform="translate(397 86)" ><path d="M2.5 0h9.0l2.5 2.5v8.0l-2.5 2.5h-9.0l-2.5-2.5v-8.0z" fill="url(#bd)"/></g><g transform="translate(420 86)" ><path d="M2.5 0h9.0l2.5 2.5v8.0l-2.5 2.5h-9.0l-2.5-2.5v-8.0z" fill="url(#bd)"/></g><g transform="translate(443 86)" ><path d="M2.5 0h9.0l2.5 2.5v8.0l-2.5 2.5h-9.0l-2.5-2.5v-8.0z" fill="url(#bd)"/></g><g transform="translate(466 86)" ><path d="M2.5 0h9.0l2.5 2.5v8.0l-2.5 2.5h-9.0l-2.5-2.5v-8.0z" fill="url(#bd)"/></g><g transform="translate(489 86)" ><path d="M2.5 0h9.0l2.5 2.5v8.0l-2.5 2.5h-9.0l-2.5-2.5v-8.0z" fill="url(#bd)"/></g><g transform="translate(774 86)" ><path d="M2.5 0h9.0l2.5 2.5v8.0l-2.5 2.5h-9.0l-2.5-2.5v-8.0z" fill="url(#bd)"/></g><g transform="translate(797 86)" ><path d="M2.5 0h9.0l2.5 2.5v8.0l-2.5 2.5h-9.0l-2.5-2.5v-8.0z" fill="url(#bd)"/></g><g transform="translate(820 86)" ><path d="M2.5 0h9.0l2.5 2.5v8.0l-2.5 2.5h-9.0l-2.5-2.5v-8.0z" fill="url(#bd)"/></g><g transform="translate(843 86)" ><path d="M2.5 0h9.0l2.5 2.5v8.0l-2.5 2.5h-9.0l-2.5-2.5v-8.0z" fill="url(#bd)"/></g><g transform="translate(866 86)" ><path d="M2.5 0h9.0l2.5 2.5v8.0l-2.5 2.5h-9.0l-2.5-2.5v-8.0z" fill="url(#bd)"/></g><g transform="translate(889 86)" ><path d="M2.5 0h9.0l2.5 2.5v8.0l-2.5 2.5h-9.0l-2.5-2.5v-8.0z" fill="url(#bd)"/></g><g transform="translate(912 86)" ><path d="M2.5 0h9.0l2.5 2.5v8.0l-2.5 2.5h-9.0l-2.5-2.5v-8.0z" fill="url(#bd)"/></g><g transform="translate(935 86)" ><path d="M2.5 0h9.0l2.5 2.5v8.0l-2.5 2.5h-9.0l-2.5-2.5v-8.0z" fill="url(#bd)"/></g><g transform="translate(958 86)" ><path d="M2.5 0h9.0l2.5 2.5v8.0l-2.5 2.5h-9.0l-2.5-2.5v-8.0z" fill="url(#bd)"/></g><g transform="translate(981 86)" ><path d="M2.5 0h9.0l2.5 2.5v8.0l-2.5 2.5h-9.0l-2.5-2.5v-8.0z" fill="url(#bd)"/></g><g transform="translate(1004 86)" ><path d="M2.5 0h9.0l2.5 2.5v8.0l-2.5 2.5h-9.0l-2.5-2.5v-8.0z" fill="url(#bd)"/></g><g transform="translate(1027 86)" ><path d="M2.5 0h9.0l2.5 2.5v8.0l-2.5 2.5h-9.0l-2.5-2.5v-8.0z" fill="url(#bd)"/></g><g transform="translate(1050 86)" ><path d="M2.5 0h9.0l2.5 2.5v8.0l-2.5 2.5h-9.0l-2.5-2.5v-8.0z" fill="url(#bd)"/></g><circle cx="873" cy="91" r="2.200" fill="#fff"/><g shape-rendering="crispEdges"><rect x="615" y="109" width="33" height="1" fill="#669999"/><rect x="615" y="109" width="1" height="24" fill="#669999"/></g><g transform="translate(620 113.5)" ><rect x=".5" y=".5" width="15.500" height="15" fill="url(#bl)" stroke="#0000e0"/><path d="M2.500 3.500v9l9-4.500zM11.500 8h3" fill="none" stroke="#000" stroke-width="1.100"/></g><path d="M641.5 120.500h5l-2.500 2.500z" fill="#000"/><g shape-rendering="crispEdges"><rect x="650" y="109" width="33" height="1" fill="#669999"/><rect x="650" y="109" width="1" height="24" fill="#669999"/></g><g transform="translate(655 113.5)" ><rect x=".5" y=".5" width="15.500" height="15" fill="url(#bl)" stroke="#0000e0"/><path d="M1.500 8.500h3l1-2 1.500 4 1.500-4 1.500 4 1-2h3.500" fill="none" stroke="#000" stroke-width="1"/></g><path d="M676.5 120.500h5l-2.500 2.500z" fill="#000"/><g transform="translate(689.5 113.5)" ><rect x=".5" y=".5" width="15.500" height="15" fill="url(#bl)" stroke="#0000e0"/><path d="M2 8h12M5.500 4.500v7l5-3.500zM11 4.500v7" fill="#000" stroke="#000" stroke-width="1"/></g><path d="M711.0 120.500h5l-2.500 2.500z" fill="#000"/><g transform="translate(724.5 113.5)" ><rect x=".5" y=".5" width="15.500" height="15" fill="url(#bl)" stroke="#0000e0"/><path d="M2 8h5M7.500 3.500v9M9.500 3v10M9.500 5h3.500v-3M9.500 11h3.500v3M9.500 8h3" fill="none" stroke="#000" stroke-width="1.100"/></g><path d="M746.0 120.500h5l-2.500 2.500z" fill="#000"/><g shape-rendering="crispEdges"><rect x="754.5" y="109" width="33" height="1" fill="#669999"/><rect x="754.5" y="109" width="1" height="24" fill="#669999"/></g><g transform="translate(759.5 113.5)" ><rect x=".5" y=".5" width="15.500" height="15" fill="url(#bl)" stroke="#0000e0"/><rect x="3.500" y="3.500" width="9.500" height="9" fill="#d0d8e8" stroke="#000"/><rect x="5.500" y="5.500" width="5.500" height="4" fill="#30d030" stroke="#000" stroke-width=".8"/></g><path d="M781.0 120.500h5l-2.500 2.500z" fill="#000"/><g transform="translate(794 113.5)" ><rect x=".5" y=".5" width="15.500" height="15" fill="url(#bl)" stroke="#0000e0"/><path d="M4.500 12v-7.500l3.500 4.500 3.500-4.500v7.500" fill="none" stroke="#000" stroke-width="1.200"/></g><path d="M815.5 120.500h5l-2.500 2.500z" fill="#000"/><g transform="translate(829 113.5)" ><rect x=".5" y=".5" width="15.500" height="15" fill="url(#bl)" stroke="#0000e0"/><path d="M8.200 2v4M8.200 10v4M3.500 6.500h9.500M5 9.500h6.500" fill="none" stroke="#000" stroke-width="1.200"/></g><path d="M850.5 120.500h5l-2.500 2.500z" fill="#000"/><g transform="translate(864 113.5)" ><rect x=".5" y=".5" width="15.500" height="15" fill="url(#bl)" stroke="#0000e0"/><path d="M8.200 2.500l5.500 5.500-5.500 5.500-5.500-5.500z" fill="#e8f0ff" stroke="#000"/><path d="M5.500 8q1.300-2.500 2.700 0t2.700 0" fill="none" stroke="#000" stroke-width=".9"/></g><path d="M885.5 120.500h5l-2.500 2.500z" fill="#000"/><g transform="translate(914 114)" ><rect x="2" y=".5" width="10.500" height="12.500" fill="#eef2f2" stroke="#4f8389" stroke-width="1.200"/><rect x="3.500" y="1.500" width="7.500" height="3" fill="url(#bd)"/><circle cx="7.200" cy="8.500" r="2.800" fill="#fff" stroke="#4f8389" stroke-width="1.300"/><path d="M.5 2v9M14 2v9" stroke="#4f8389"/></g><g transform="translate(937 114)" ><rect x=".5" y=".5" width="14" height="6.500" fill="url(#bd)"/><path d="M14.500 1v12M.5 12.500h14" stroke="#4f8389" stroke-width="1.100" fill="none"/><path d="M3 10.500h1.500M6.500 10.500h1.500M10 10.500h2M4 9v3M11 9v3" stroke="#4f8389" stroke-width="1"/></g><g transform="translate(960 114)" ><rect x=".5" y=".5" width="5" height="5" fill="#fff" stroke="#4f8389"/><rect x="9" y=".5" width="5" height="5" fill="#fff" stroke="#4f8389"/><path d="M14.500 5v7.500M1 12.500h14M2.500 11v3M5 11v3M10 11v3M12.500 11v3" stroke="#4f8389" stroke-width="1.100"/></g><g transform="translate(983 114)" ><rect x=".5" y=".5" width="14" height="12.500" fill="#fff" stroke="#4f8389"/><path d="M1 7l3.500-5.500 3 4 3-4 3 5.500M1 9.500h13.500M11.500 1v8M2.500 11v2M5 11v2" stroke="#4f8389" fill="none"/></g><g transform="translate(1006 114)" ><rect x=".5" y=".5" width="14" height="6.500" fill="url(#bd)"/><path d="M14.500 1v12M.5 12.500h14" stroke="#4f8389" stroke-width="1.100" fill="none"/><path d="M3 10.500h1.500M6.500 10.500h1.500M10 10.500h2M4 9v3M11 9v3" stroke="#4f8389" stroke-width="1"/></g><g transform="translate(1029 114)" ><rect x=".5" y=".5" width="14" height="6.500" fill="url(#bd)"/><path d="M14.500 1v12M.5 12.500h14" stroke="#4f8389" stroke-width="1.100" fill="none"/><path d="M3 10.500h1.500M6.500 10.500h1.500M10 10.500h2M4 9v3M11 9v3" stroke="#4f8389" stroke-width="1"/></g><g transform="translate(1052 114)" ><rect x=".5" y=".5" width="14" height="6.500" fill="url(#bd)"/><path d="M14.500 1v12M.5 12.500h14" stroke="#4f8389" stroke-width="1.100" fill="none"/><path d="M3 10.500h1.500M6.500 10.500h1.500M10 10.500h2M4 9v3M11 9v3" stroke="#4f8389" stroke-width="1"/></g><g transform="translate(1075 114)" ><rect x="1" y=".5" width="12.500" height="13" fill="url(#bd)"/><path d="M.5 0v14" stroke="#4f8389"/></g><g transform="translate(1098 114)" ><rect x=".5" y=".5" width="11" height="7.500" fill="#fff" stroke="#4f8389"/><path d="M2 7l7-5.500" stroke="#4f8389"/><rect x="11.500" y=".5" width="3" height="13" fill="#eef2f2" stroke="#4f8389"/><rect x="1" y="9.500" width="10" height="4" fill="url(#bd)" opacity=".8"/></g><g transform="translate(1121 114)" ><rect x=".5" y=".5" width="14" height="6.500" fill="url(#bd)"/><path d="M14.500 1v12M.5 12.500h14" stroke="#4f8389" stroke-width="1.100" fill="none"/><path d="M3 10.500h1.500M6.500 10.500h1.500M10 10.500h2M4 9v3M11 9v3" stroke="#4f8389" stroke-width="1"/></g><g transform="translate(1144 114)" ><rect x=".5" y=".5" width="14" height="6.500" fill="url(#bd)"/><path d="M14.500 1v12M.5 12.500h14" stroke="#4f8389" stroke-width="1.100" fill="none"/><path d="M3 10.500h1.500M6.500 10.500h1.500M10 10.500h2M4 9v3M11 9v3" stroke="#4f8389" stroke-width="1"/></g><g transform="translate(1167 114)" ><path d="M2.500 1h3l2 3.500h5.500q2 0 2 2v4q0 2-2 2h-10q-2 0-2-2v-4q0-2 1.500-2z" fill="#f4f000" stroke="#807800" stroke-width=".8"/><text x="8.200" y="11.300" font-size="7.500" font-weight="bold" text-anchor="middle" fill="#000" textLength="11" lengthAdjust="spacingAndGlyphs">1.4v</text></g><g transform="translate(1190 114)" ><rect x="2" y=".5" width="12" height="13" fill="url(#bd)"/><path d="M0 3h2M0 6.500h2M0 10h2M14 3h2M14 6.500h2M14 10h2" stroke="#4f8389"/></g><g transform="translate(15 140)" ><path d="M3 6.500h9M7.500 3.500v3M5 9h5M7.500 9v3" fill="none" stroke="#4f8389" stroke-width="1.100"/></g><g transform="translate(38 140)" ><path d="M4 3.500v9l8-4.500zM0 5h4M0 11h4M12 8h3M6 6l2 2-2 2" fill="none" stroke="#4f8389" stroke-width="1.100"/></g><g transform="translate(61 140)" ><path d="M1.500 7.500q.9-3.500 1.800 0t1.800 0 1.800 0 1.800 0 1.800 0 1.800 0 1.800 0" fill="none" stroke="#4f8389" stroke-width="1.100"/></g><g transform="translate(84 140)" ><path d="M3 9h9M9 4l-4 9M6 12l4 3M5 13.500l1.500 1.500" fill="none" stroke="#4f8389" stroke-width="1.100"/></g><g transform="translate(107 140)" ><path d="M1.500 8.500h11M5 5v7l5-3.500zM10.500 5v7" fill="none" stroke="#4f8389" stroke-width="1.100"/></g><g transform="translate(129 140)" ><path d="M3 3h5M5.500 3v2M2 6.500h6q5 0 6 3.500-1 3.500-6 3.500h-6zM0 8.500h2M0 12h2M14 10h2" fill="none" stroke="#4f8389" stroke-width="1.100"/><text x="6" y="5" font-size="5.500" fill="#4f8389" font-weight="bold" text-anchor="middle">TTL</text></g><g transform="translate(152 140)" ><path d="M2 6.500h6q5 0 6 3.500-1 3.500-6 3.500h-6zM0 8.500h2M0 12h2M14 10h2" fill="none" stroke="#4f8389" stroke-width="1.100"/><text x="7.500" y="5" font-size="5.500" fill="#4f8389" font-weight="bold" text-anchor="middle" textLength="14">CMOS</text></g><g transform="translate(175 140)" ><rect x="3.500" y="4.500" width="9" height="7.500" rx="1.500" fill="none" stroke="#4f8389" stroke-width="1.100"/><path d="M0 8.500h3.500M12.500 8.500h3.500M5.500 10.500v-4l2.500 3 2.500-3v4" fill="none" stroke="#4f8389" stroke-width="1.100"/></g><g transform="translate(198 140)" ><rect x="2.500" y="3.500" width="10" height="10.500" fill="none" stroke="#4f8389" stroke-width="1.100"/><path d="M5 6.500h1.500M9 6.500h1.500M5 11h1.500M9 11h1.500M6 8.700h4" fill="none" stroke="#4f8389" stroke-width="1.100" stroke-dasharray="1.500 1"/></g><text x="229.500" y="150.500" font-size="6.500" fill="#4f8389" font-weight="bold" font-family="Liberation Sans" textLength="16" lengthAdjust="spacingAndGlyphs">MISC</text><g transform="translate(252 140)" ><path d="M6 14v-10.500h7.500v11" fill="none" stroke="#4f8389" stroke-width="1.100"/><text x="1" y="15.500" font-size="10.500" font-weight="bold" fill="#4f8389" font-family="Liberation Serif">0</text><text x="7.500" y="15.500" font-size="10.500" font-weight="bold" fill="#4f8389" font-family="Liberation Serif">1</text></g><g transform="translate(275 140)" ><path d="M2 8l3.500-4.500 3.500 4.500" fill="none" stroke="#4f8389" stroke-width="1.100" stroke-dasharray="2 1"/><text x="1.500" y="15.500" font-size="10.500" font-weight="bold" fill="#4f8389" font-family="Liberation Serif">0</text><text x="7" y="15.500" font-size="10.500" font-weight="bold" fill="#4f8389" font-family="Liberation Serif">V</text></g><g transform="translate(306 140)" ><path d="M7.500 14v-7.500l-5-5M7.500 6.500l5-5" fill="none" stroke="#4f8389" stroke-width="1.100"/></g><g transform="translate(14 169)" ><path d="M2 1.500h12M1 4.500h13M1 7.500h7M1 10.500h7M1 13.500h7M10.500 5v9.500M13 5v9.500" fill="none" stroke="#4f8389" stroke-width="1.100"/></g><g transform="translate(38 169)" ><path d="M0 6h11M7 1l5 5-5 5M12.500 1v10" fill="none" stroke="#4f8389" stroke-width="1.100"/><path d="M7 13.500h8" stroke="#4f8389" stroke-width="1.800" stroke-dasharray="1.800 1"/></g><g transform="translate(60 169)" ><rect x=".5" y=".5" width="9" height="9" fill="url(#bd)"/><circle cx="10.500" cy="10.500" r="4.500" fill="#cfdcdc" stroke="#4f8389"/><path d="M6 10.500h9M10.500 6v9" stroke="#4f8389" stroke-width=".8"/></g><g transform="translate(83 169)" ><rect x="3.500" y="2.500" width="12" height="12" fill="#eef2f2" stroke="#4f8389"/><ellipse cx="5.500" cy="4.500" rx="5.500" ry="4" fill="url(#bd)"/><path d="M5 9.500h8M5 11.500h8M7 13.500l5-2.500" stroke="#4f8389"/></g><g transform="translate(107 169)" ><path d="M1.500 1h7l4 4v9.500h-11z" fill="#eef2f2" stroke="#4f8389" stroke-width="1.200"/><rect x="4.500" y="7" width="5.500" height="5" fill="none" stroke="#4f8389"/><path d="M5.500 7v-2h3v2" fill="none" stroke="#4f8389" stroke-width="1.100"/></g><g transform="translate(130 169)" ><rect x="1.500" y="1" width="12" height="13.500" fill="#eef2f2" stroke="#4f8389"/><rect x="1.500" y="1" width="5" height="6" fill="url(#bd)" opacity=".7"/><path d="M7.500 4h5M4 9h8M4 11.500h8M6 13.500l5-2.500" stroke="#4f8389"/></g><text x="159.500" y="182.500" font-family="Liberation Serif" font-weight="bold" font-size="14" text-anchor="middle" fill="#4f8389">B</text><g transform="translate(176 169)" ><path d="M1 12.500l11-10.500" stroke="#4f8389" stroke-width="2.200"/><path d="M0 13.500h4" stroke="#4f8389"/></g><text x="205.500" y="181.500" font-family="Liberation Serif" font-weight="bold" font-size="13" text-anchor="middle" fill="#4f8389">U</text><rect x="201" y="183" width="9" height="1" fill="#4f8389"/><g transform="translate(221 169)" ><circle cx="9.500" cy="6" r="6" fill="url(#bd)"/><path d="M4 6h11M9.500 0v12M5.500 2l8 8M13.500 2l-8 8" stroke="#dfe8e8" stroke-width=".6"/><path d="M1 14.500l2.500-6 2.500 6M1.800 12.500h3.400" fill="none" stroke="#4f8389" stroke-width="1.100"/></g><rect x="246" y="171.0" width="11" height="1" fill="#4f8389" shape-rendering="crispEdges"/><rect x="246" y="173.500" width="8" height="1" fill="#4f8389" shape-rendering="crispEdges"/><rect x="246" y="176.0" width="11" height="1" fill="#4f8389" shape-rendering="crispEdges"/><rect x="246" y="178.500" width="8" height="1" fill="#4f8389" shape-rendering="crispEdges"/><rect x="246" y="181.0" width="11" height="1" fill="#4f8389" shape-rendering="crispEdges"/><rect x="269.0" y="171.0" width="11" height="1" fill="#4f8389" shape-rendering="crispEdges"/><rect x="270.500" y="173.500" width="8" height="1" fill="#4f8389" shape-rendering="crispEdges"/><rect x="269.0" y="176.0" width="11" height="1" fill="#4f8389" shape-rendering="crispEdges"/><rect x="270.500" y="178.500" width="8" height="1" fill="#4f8389" shape-rendering="crispEdges"/><rect x="269.0" y="181.0" width="11" height="1" fill="#4f8389" shape-rendering="crispEdges"/><rect x="292" y="171.0" width="11" height="1" fill="#4f8389" shape-rendering="crispEdges"/><rect x="295" y="173.500" width="8" height="1" fill="#4f8389" shape-rendering="crispEdges"/><rect x="292" y="176.0" width="11" height="1" fill="#4f8389" shape-rendering="crispEdges"/><rect x="295" y="178.500" width="8" height="1" fill="#4f8389" shape-rendering="crispEdges"/><rect x="292" y="181.0" width="11" height="1" fill="#4f8389" shape-rendering="crispEdges"/><g transform="translate(314 169)" ><path d="M4.500 2h9M4.500 7h9M4.500 12h9" fill="none" stroke="#4f8389" stroke-width="1.100"/><rect x="0" y="1" width="2.500" height="2.500" fill="#4f8389"/><rect x="0" y="6" width="2.500" height="2.500" fill="#4f8389"/><rect x="0" y="11" width="2.500" height="2.500" fill="#4f8389"/></g><g transform="translate(336 169)" ><rect x="3.500" y="1.500" width="12" height="13" fill="#eef2f2" stroke="#4f8389"/><rect x="0" y="0" width="8" height="9" fill="url(#bd)" opacity=".6"/><path d="M6 5h8M6 7.500h8M6 10h8M8 13l5-2.500" stroke="#4f8389"/></g></g><g><text x="24" y="17.61" font-size="13" font-weight="bold" fill="#fff" font-family="'Liberation Sans','Noto Sans CJK SC',sans-serif" textLength="63.5" lengthAdjust="spacing">变压器试验</text><text x="92.5" y="17.5" font-size="12" fill="#fff" font-weight="bold" font-family="Liberation Sans" textLength="68" lengthAdjust="spacingAndGlyphs">- Multisim - [</text><text x="160" y="17.61" font-size="13" font-weight="bold" fill="#fff" font-family="'Liberation Sans','Noto Sans CJK SC',sans-serif" textLength="63.5" lengthAdjust="spacing">变压器试验</text><text x="225" y="17.5" font-size="12" fill="#fff" font-weight="bold" font-family="Liberation Sans" >]</text><text x="35" y="42" font-size="11" fill="#000" font-family="Liberation Sans" textLength="15" lengthAdjust="spacingAndGlyphs" stroke="#000" stroke-width=".25">File</text><rect x="35.0" y="44" width="6" height="1" fill="#000" shape-rendering="crispEdges"/><text x="64" y="42" font-size="11" fill="#000" font-family="Liberation Sans" textLength="17" lengthAdjust="spacingAndGlyphs" stroke="#000" stroke-width=".25">Edit</text><rect x="64.0" y="44" width="6" height="1" fill="#000" shape-rendering="crispEdges"/><text x="94" y="42" font-size="11" fill="#000" font-family="Liberation Sans" textLength="22" lengthAdjust="spacingAndGlyphs" stroke="#000" stroke-width=".25">View</text><rect x="94.0" y="44" width="6" height="1" fill="#000" shape-rendering="crispEdges"/><text x="129" y="42" font-size="11" fill="#000" font-family="Liberation Sans" textLength="29" lengthAdjust="spacingAndGlyphs" stroke="#000" stroke-width=".25">Insert</text><rect x="129.0" y="44" width="6" height="1" fill="#000" shape-rendering="crispEdges"/><text x="171" y="42" font-size="11" fill="#000" font-family="Liberation Sans" textLength="25" lengthAdjust="spacingAndGlyphs" stroke="#000" stroke-width=".25">Place</text><rect x="171.0" y="44" width="6" height="1" fill="#000" shape-rendering="crispEdges"/><text x="209" y="42" font-size="11" fill="#000" font-family="Liberation Sans" textLength="34" lengthAdjust="spacingAndGlyphs" stroke="#000" stroke-width=".25">Format</text><rect x="225.200" y="44" width="8" height="1" fill="#000" shape-rendering="crispEdges"/><text x="256" y="42" font-size="11" fill="#000" font-family="Liberation Sans" textLength="40" lengthAdjust="spacingAndGlyphs" stroke="#000" stroke-width=".25">Simulate</text><rect x="256.0" y="44" width="6" height="1" fill="#000" shape-rendering="crispEdges"/><text x="309" y="42" font-size="11" fill="#000" font-family="Liberation Sans" textLength="41" lengthAdjust="spacingAndGlyphs" stroke="#000" stroke-width=".25">Transfer</text><rect x="318.700" y="44" width="5" height="1" fill="#000" shape-rendering="crispEdges"/><text x="363" y="42" font-size="11" fill="#000" font-family="Liberation Sans" textLength="25" lengthAdjust="spacingAndGlyphs" stroke="#000" stroke-width=".25">Tools</text><rect x="363.0" y="44" width="6" height="1" fill="#000" shape-rendering="crispEdges"/><text x="401" y="42" font-size="11" fill="#000" font-family="Liberation Sans" textLength="38" lengthAdjust="spacingAndGlyphs" stroke="#000" stroke-width=".25">Reports</text><rect x="401.0" y="44" width="6" height="1" fill="#000" shape-rendering="crispEdges"/><text x="452" y="42" font-size="11" fill="#000" font-family="Liberation Sans" textLength="37" lengthAdjust="spacingAndGlyphs" stroke="#000" stroke-width=".25">Options</text><rect x="452.0" y="44" width="6" height="1" fill="#000" shape-rendering="crispEdges"/><text x="502" y="42" font-size="11" fill="#000" font-family="Liberation Sans" textLength="39" lengthAdjust="spacingAndGlyphs" stroke="#000" stroke-width=".25">Window</text><rect x="502.0" y="44" width="6" height="1" fill="#000" shape-rendering="crispEdges"/><text x="553" y="42" font-size="11" fill="#000" font-family="Liberation Sans" textLength="21" lengthAdjust="spacingAndGlyphs" stroke="#000" stroke-width=".25">Help</text><rect x="553.0" y="44" width="6" height="1" fill="#000" shape-rendering="crispEdges"/><text x="342.200" y="251" font-size="16" fill="#000" font-family="Liberation Sans" stroke="#000" stroke-width="0.4">U1</text><text x="305.300" y="319" font-size="16" fill="#000" font-family="Liberation Sans" stroke="#000" stroke-width="0.4">AC  1e-009</text><path transform="translate(387.8 308.5)" d="M0 10h2.200v-1.300C.9 7.600 .4 6.200 .4 4.400 .4 1.700 1.400 .3 3 .3s2.600 1.400 2.600 4.100c0 1.800-.5 3.200-1.800 4.300v1.300h2.200" fill="none" stroke="#000" stroke-width="1.050"/><text x="893.400" y="251" font-size="16" fill="#000" font-family="Liberation Sans" stroke="#000" stroke-width="0.4">U3</text><text x="856.300" y="319" font-size="16" fill="#000" font-family="Liberation Sans" stroke="#000" stroke-width="0.4">AC  1e-009</text><path transform="translate(938.8 308.5)" d="M0 10h2.200v-1.300C.9 7.600 .4 6.200 .4 4.400 .4 1.700 1.400 .3 3 .3s2.600 1.400 2.600 4.100c0 1.800-.5 3.200-1.800 4.300v1.300h2.200" fill="none" stroke="#000" stroke-width="1.050"/><text x="283.400" y="385" font-size="16" fill="#000" font-family="Liberation Sans" stroke="#000" stroke-width="0.4">V1</text><text x="282.500" y="423" font-size="16" fill="#000" font-family="Liberation Sans" stroke="#000" stroke-width="0.4">220 V</text><text x="282.400" y="441" font-size="16" fill="#000" font-family="Liberation Sans" stroke="#000" stroke-width="0.4">50kHz</text><text x="282.300" y="460" font-size="16" fill="#000" font-family="Liberation Sans" stroke="#000" stroke-width="0.4">0Deg</text><text x="473.700" y="459" font-size="16" fill="#000" font-family="Liberation Sans" stroke="#000" stroke-width="0.4">U2</text><text x="475" y="476" font-size="16" fill="#000" font-family="Liberation Sans" stroke="#000" stroke-width="0.4">AC  10M</text><path transform="translate(538 465.5)" d="M0 10h2.200v-1.300C.9 7.600 .4 6.200 .4 4.400 .4 1.700 1.400 .3 3 .3s2.600 1.400 2.600 4.100c0 1.800-.5 3.200-1.800 4.300v1.300h2.200" fill="none" stroke="#000" stroke-width="1.050"/><text x="822.400" y="414" font-size="16" fill="#000" font-family="Liberation Sans" stroke="#000" stroke-width="0.4">U4</text><text x="824" y="431" font-size="16" fill="#000" font-family="Liberation Sans" stroke="#000" stroke-width="0.4">AC  10M</text><path transform="translate(887 420.5)" d="M0 10h2.200v-1.300C.9 7.600 .4 6.200 .4 4.400 .4 1.700 1.400 .3 3 .3s2.600 1.400 2.600 4.100c0 1.800-.5 3.200-1.800 4.300v1.300h2.200" fill="none" stroke="#000" stroke-width="1.050"/><text x="343.500" y="655" font-size="16" fill="#000" font-family="Liberation Sans" stroke="#000" stroke-width="0.4">U5</text><text x="316.500" y="723" font-size="16" fill="#000" font-family="Liberation Sans" stroke="#000" stroke-width="0.4">AC  10M</text><path transform="translate(379.5 712.5)" d="M0 10h2.200v-1.300C.9 7.600 .4 6.200 .4 4.400 .4 1.700 1.400 .3 3 .3s2.600 1.400 2.600 4.100c0 1.800-.5 3.200-1.800 4.300v1.300h2.200" fill="none" stroke="#000" stroke-width="1.050"/><text x="597.500" y="393" font-size="16" fill="#000" font-family="Liberation Sans" stroke="#000" stroke-width="0.4">T1</text><text x="560.500" y="465" font-size="16" fill="#000" font-family="Liberation Sans" stroke="#000" stroke-width="0.4">1 sq.m</text><text x="621.400" y="465" font-size="16" fill="#000" font-family="Liberation Sans" stroke="#000" stroke-width="0.4">1 m</text><text x="342" y="594" font-size="16" fill="#000" font-family="Liberation Sans" stroke="#000" stroke-width="0.4">R1</text><text x="332.400" y="628" font-size="16" fill="#000" font-family="Liberation Sans" stroke="#000" stroke-width="0.4">2k</text><path transform="translate(350.5 617.5)" d="M0 10h2.200v-1.300C.9 7.600 .4 6.200 .4 4.400 .4 1.700 1.400 .3 3 .3s2.600 1.400 2.600 4.100c0 1.800-.5 3.200-1.800 4.300v1.300h2.200" fill="none" stroke="#000" stroke-width="1.050"/><text x="848.200" y="594" font-size="16" fill="#000" font-family="Liberation Sans" stroke="#000" stroke-width="0.4">R2</text><text x="838.400" y="628" font-size="16" fill="#000" font-family="Liberation Sans" stroke="#000" stroke-width="0.4">2k</text><path transform="translate(856.5 617.5)" d="M0 10h2.200v-1.300C.9 7.600 .4 6.200 .4 4.400 .4 1.700 1.400 .3 3 .3s2.600 1.400 2.600 4.100c0 1.800-.5 3.200-1.800 4.300v1.300h2.200" fill="none" stroke="#000" stroke-width="1.050"/><text x="443.400" y="275" font-size="16" fill="#ff0000" font-weight="bold" font-family="Liberation Sans" >3</text><text x="803.800" y="275" font-size="16" fill="#ff0000" font-weight="bold" font-family="Liberation Sans" >2</text><text x="262" y="338.500" font-size="16" fill="#ff0000" font-weight="bold" font-family="Liberation Sans" >1</text><text x="980.500" y="439" font-size="16" fill="#ff0000" font-weight="bold" font-family="Liberation Sans" >5</text><text x="767.700" y="530" font-size="16" fill="#ff0000" font-weight="bold" font-family="Liberation Sans" >4</text><text x="303.500" y="601.500" font-size="16" fill="#ff0000" font-weight="bold" font-family="Liberation Sans" >0</text><text x="429.300" y="648" font-size="16" fill="#ff0000" font-weight="bold" font-family="Liberation Sans" >6</text><text x="325.400" y="284" font-size="14" fill="#00ff00" font-weight="bold" font-family="Liberation Sans" >2.854m</text><text x="877.200" y="284" font-size="14" fill="#00ff00" font-weight="bold" font-family="Liberation Sans" >0.014</text><text x="394.200" y="476" font-size="14" fill="#00ff00" font-weight="bold" font-family="Liberation Sans" >149.876</text><text x="742.600" y="431" font-size="14" fill="#00ff00" font-weight="bold" font-family="Liberation Sans" >28.278</text><text x="325.500" y="689" font-size="14" fill="#00ff00" font-weight="bold" font-family="Liberation Sans" >5.686</text><path d="M309.500 266.500h6M312.500 263.500v6" stroke="#00ff00" fill="none" shape-rendering="crispEdges"/><path d="M393.500 265.500h5" stroke="#00ff00" fill="none" shape-rendering="crispEdges"/><text x="396" y="282" font-size="8" fill="#00ff00" font-weight="bold" text-anchor="middle" font-family="Liberation Sans" >A</text><path d="M860.500 266.500h6M863.500 263.500v6" stroke="#00ff00" fill="none" shape-rendering="crispEdges"/><path d="M944.500 265.500h5" stroke="#00ff00" fill="none" shape-rendering="crispEdges"/><text x="947" y="282" font-size="8" fill="#00ff00" font-weight="bold" text-anchor="middle" font-family="Liberation Sans" >A</text><path d="M376.500 457.500h6M379.500 454.500v6" stroke="#00ff00" fill="none" shape-rendering="crispEdges"/><path d="M378.0 485.500h5" stroke="#00ff00" fill="none" shape-rendering="crispEdges"/><text x="459.500" y="474.500" font-size="8" fill="#00ff00" font-weight="bold" text-anchor="middle" font-family="Liberation Sans" >V</text><path d="M725.500 412.500h6M728.500 409.500v6" stroke="#00ff00" fill="none" shape-rendering="crispEdges"/><path d="M727.0 440.500h5" stroke="#00ff00" fill="none" shape-rendering="crispEdges"/><text x="808.500" y="429.500" font-size="8" fill="#00ff00" font-weight="bold" text-anchor="middle" font-family="Liberation Sans" >V</text><path d="M314.500 670.500h6M317.500 667.500v6" stroke="#00ff00" fill="none" shape-rendering="crispEdges"/><path d="M392.0 668.500h5" stroke="#00ff00" fill="none" shape-rendering="crispEdges"/><text x="392.500" y="688" font-size="8" fill="#00ff00" font-weight="bold" text-anchor="middle" font-family="Liberation Sans" >V</text><text x="157.500" y="242" font-size="9" fill="#505050" text-anchor="middle" font-family="Liberation Sans" >A</text><text x="1032" y="242" font-size="9" fill="#505050" text-anchor="middle" font-family="Liberation Sans" >A</text><text x="157.500" y="362" font-size="9" fill="#505050" text-anchor="middle" font-family="Liberation Sans" >B</text><text x="1032" y="362" font-size="9" fill="#505050" text-anchor="middle" font-family="Liberation Sans" >B</text><text x="157.500" y="482" font-size="9" fill="#505050" text-anchor="middle" font-family="Liberation Sans" >C</text><text x="1032" y="482" font-size="9" fill="#505050" text-anchor="middle" font-family="Liberation Sans" >C</text><text x="157.500" y="602" font-size="9" fill="#505050" text-anchor="middle" font-family="Liberation Sans" >D</text><text x="1032" y="602" font-size="9" fill="#505050" text-anchor="middle" font-family="Liberation Sans" >D</text><text x="157.500" y="722" font-size="9" fill="#505050" text-anchor="middle" font-family="Liberation Sans" >E</text><text x="1032" y="722" font-size="9" fill="#505050" text-anchor="middle" font-family="Liberation Sans" >E</text><text x="6.5" y="206.14" font-size="12" fill="#5f8a90" font-family="'Liberation Sans','Noto Sans CJK SC',sans-serif" textLength="58.5" lengthAdjust="spacing">设计工具箱</text><text x="37" y="265.64" font-size="12" fill="#000" font-family="'Liberation Sans','Noto Sans CJK SC',sans-serif" textLength="24" lengthAdjust="spacing">电路</text><text x="61.500" y="266" font-size="11" fill="#000" font-family="Liberation Sans" >1</text><text x="56" y="283.64" font-size="12" fill="#000" font-family="'Liberation Sans','Noto Sans CJK SC',sans-serif" textLength="24" lengthAdjust="spacing">电路</text><text x="80.500" y="284" font-size="11" fill="#000" font-family="Liberation Sans" >1</text><text x="36.5" y="301.64" font-size="12" fill="#000" font-family="'Liberation Sans','Noto Sans CJK SC',sans-serif" textLength="60" lengthAdjust="spacing">变压器试验</text><text x="55" y="319.64" font-size="12" fill="#000" font-family="'Liberation Sans','Noto Sans CJK SC',sans-serif" textLength="60" lengthAdjust="spacing">变压器试验</text><text x="50" y="770.64" font-size="12" fill="#000" font-family="'Liberation Sans','Noto Sans CJK SC',sans-serif" textLength="24" lengthAdjust="spacing">层次</text><text x="18" y="786.64" font-size="12" fill="#000" font-family="'Liberation Sans','Noto Sans CJK SC',sans-serif" textLength="24" lengthAdjust="spacing">可见</text><text x="64.5" y="786.64" font-size="12" fill="#000" font-family="'Liberation Sans','Noto Sans CJK SC',sans-serif" textLength="48" lengthAdjust="spacing">项目视图</text><text x="165.5" y="794.14" font-size="12" fill="#000" font-family="'Liberation Sans','Noto Sans CJK SC',sans-serif" textLength="24" lengthAdjust="spacing">电路</text><text x="189.500" y="794.500" font-size="11" fill="#000" font-family="Liberation Sans" >1</text><text x="224" y="795.64" font-size="12" fill="#000" font-family="'Liberation Sans','Noto Sans CJK SC',sans-serif" textLength="60" lengthAdjust="spacing">变压器试验</text><text x="32.5" y="834.64" font-size="12" fill="#000" font-family="'Liberation Sans','Noto Sans CJK SC',sans-serif" textLength="24" lengthAdjust="spacing">结果</text><text x="1.5" y="865.64" font-size="12" fill="#000" font-family="'Liberation Sans','Noto Sans CJK SC',sans-serif">按</text><text x="13.500" y="866" font-size="11" fill="#000" font-family="Liberation Sans" >F1</text><text x="25.5" y="865.64" font-size="12" fill="#000" font-family="'Liberation Sans','Noto Sans CJK SC',sans-serif" textLength="72" lengthAdjust="spacing">显示帮助信息</text><text x="1104" y="865.64" font-size="12" fill="#000" font-family="'Liberation Sans','Noto Sans CJK SC',sans-serif" textLength="48" lengthAdjust="spacing">传递函数</text><text x="1152" y="866" font-size="11" fill="#000" font-family="Liberation Sans" >: 0.140 s</text><text x="1242" y="865.64" font-size="12" fill="#000" font-family="'Liberation Sans','Noto Sans CJK SC',sans-serif" textLength="60" lengthAdjust="spacing">变压器试验</text><text x="1302" y="866" font-size="11" fill="#000" font-family="Liberation Sans" >:</text><text x="1308" y="865.64" font-size="12" fill="#000" font-family="'Liberation Sans','Noto Sans CJK SC',sans-serif" textLength="48" lengthAdjust="spacing">正在仿真</text><text x="1356" y="866" font-size="11" fill="#000" font-family="Liberation Sans" >...</text><text x="1016" y="866" font-size="11" fill="#000" font-family="Liberation Sans" >-</text><text x="188" y="889.64" font-size="12" fill="#e8fff8" font-family="'Liberation Sans','Noto Sans CJK SC',sans-serif" textLength="48" lengthAdjust="spacing">综合讨论</text><text x="240" y="890" font-size="11" fill="#e8fff8" font-family="Liberation Sans" >-</text><text x="249" y="889.64" font-size="12" fill="#e8fff8" font-family="'Liberation Sans','Noto Sans CJK SC',sans-serif" textLength="48" lengthAdjust="spacing">工控人家</text><text x="297" y="890" font-size="11" fill="#e8fff8" font-family="Liberation Sans" >...</text><text x="349" y="890" font-size="11" fill="#e8fff8" font-family="Liberation Sans" >EWB9</text><text x="510" y="889.64" font-size="12" fill="#e8fff8" font-family="'Liberation Sans','Noto Sans CJK SC',sans-serif" textLength="60" lengthAdjust="spacing">变压器试验</text><text x="574" y="890" font-size="11" fill="#e8fff8" font-family="Liberation Sans" textLength="50" lengthAdjust="spacing">- Multisi...</text><text x="1404" y="890" font-size="11" fill="#e8fff8" font-family="Liberation Sans" >21:39</text></g><g><g transform="translate(11 30)" ><path d="M.5 .5h10l5 5v10h-15z" fill="#fff" stroke="#000" stroke-width="1.100"/><path d="M10.500 .5v5h5" fill="none" stroke="#000" stroke-width="1.100"/><path d="M1 3.500h3M1 8.500h2.500M8 3.500h2v7h-3M2.500 3.500v5M1.500 14.500l2-2.500" fill="none" stroke="#f00000" stroke-width="1.200"/><path d="M4.500 1.500v4l3-2zM4.500 9l3 3M7.500 9l-3 3M4 10.500h4" fill="#fff" stroke="#000" stroke-width=".9"/></g><g transform="translate(35 272)" ><path d="M.5 .5h10l5 5v10h-15z" fill="#fff" stroke="#000" stroke-width="1.100"/><path d="M10.500 .5v5h5" fill="none" stroke="#000" stroke-width="1.100"/><path d="M1 3.500h3M1 8.500h2.500M8 3.500h2v7h-3M2.500 3.500v5M1.500 14.500l2-2.500" fill="none" stroke="#f00000" stroke-width="1.200"/><path d="M4.500 1.500v4l3-2zM4.500 9l3 3M7.500 9l-3 3M4 10.500h4" fill="#fff" stroke="#000" stroke-width=".9"/></g><g transform="translate(35 308)" ><path d="M.5 .5h10l5 5v10h-15z" fill="#fff" stroke="#000" stroke-width="1.100"/><path d="M10.500 .5v5h5" fill="none" stroke="#000" stroke-width="1.100"/><path d="M1 3.500h3M1 8.500h2.500M8 3.500h2v7h-3M2.500 3.500v5M1.500 14.500l2-2.500" fill="none" stroke="#f00000" stroke-width="1.200"/><path d="M4.500 1.500v4l3-2zM4.500 9l3 3M7.500 9l-3 3M4 10.500h4" fill="#fff" stroke="#000" stroke-width=".9"/></g><g transform="translate(146 782)" ><path d="M.5 .5h10l5 5v10h-15z" fill="#fff" stroke="#000" stroke-width="1.100"/><path d="M10.500 .5v5h5" fill="none" stroke="#000" stroke-width="1.100"/><path d="M1 3.500h3M1 8.500h2.500M8 3.500h2v7h-3M2.500 3.500v5M1.500 14.500l2-2.500" fill="none" stroke="#f00000" stroke-width="1.200"/><path d="M4.500 1.500v4l3-2zM4.500 9l3 3M7.500 9l-3 3M4 10.500h4" fill="#fff" stroke="#000" stroke-width=".9"/></g><g transform="translate(206 783)" ><path d="M.5 .5h10l5 5v10h-15z" fill="#fff" stroke="#000" stroke-width="1.100"/><path d="M10.500 .5v5h5" fill="none" stroke="#000" stroke-width="1.100"/><path d="M1 3.500h3M1 8.500h2.500M8 3.500h2v7h-3M2.500 3.500v5M1.500 14.500l2-2.500" fill="none" stroke="#f00000" stroke-width="1.200"/><path d="M4.500 1.500v4l3-2zM4.500 9l3 3M7.500 9l-3 3M4 10.500h4" fill="#fff" stroke="#000" stroke-width=".9"/></g><g transform="translate(2 5)" ><path d="M1 12l6 3.500 8-4.500-6-3z" fill="#d8d8d8"/><path d="M.5 6l8-4.500 8 2.500-8.500 7z" fill="#2020a0"/><path d="M3 6l2 .8M6 4.500l2 1M9 6.500l2 1M5 8l2 1" stroke="#fff" stroke-width="1.200"/><rect x="2" y="5" width="2" height="2" fill="#f0e000"/><rect x="12" y="4" width="2.500" height="1.500" fill="#f0e000"/></g><g transform="translate(490 877)" transform-origin="0 0"><path d="M1 12l6 3.500 8-4.500-6-3z" fill="#d8d8d8"/><path d="M.5 6l8-4.500 8 2.500-8.500 7z" fill="#2020a0"/><path d="M3 6l2 .8M6 4.500l2 1M9 6.500l2 1M5 8l2 1" stroke="#fff" stroke-width="1.200"/><rect x="2" y="5" width="2" height="2" fill="#f0e000"/><rect x="12" y="4" width="2.500" height="1.500" fill="#f0e000"/></g><rect x="1226" y="0" width="212" height="2.500" fill="#40d0f4"/><path d="M1342.500 1.500h94v9q0 4.500-4.500 4.500h-85q-4.500 0-4.500-4.500z" fill="#c8d0d8" stroke="#f0f8f8" stroke-width="1.200"/><path d="M1343.500 2h24v12.500h-20q-4 0-4-4z" fill="#a0b0b8" stroke="#303838" stroke-width="1"/><rect x="1368" y="2" width="25" height="12.500" fill="#c8d4dc" stroke="#303838" stroke-width="1"/><path d="M1393.500 2h42v8.500q0 4-4 4h-38z" fill="#d03840" stroke="#401818" stroke-width="1"/><rect x="1349.500" y="7.500" width="11" height="3" fill="#fff" stroke="#303030" stroke-width=".9"/><rect x="1375.500" y="3.500" width="9" height="7.500" fill="#fff" stroke="#303048" stroke-width="1"/><rect x="1377.500" y="5.500" width="3" height="3" fill="#c8d4dc" stroke="#303048" stroke-width="1"/><path d="M1410 2l8 8M1418 2l-8 8" stroke="#fff" stroke-width="2.600"/><rect x="1396" y="43" width="6" height="2" fill="#000"/><path d="M1413.500 39.500h5v4h-5zM1411.500 42.500h5v4h-5z" fill="#fff" stroke="#000" stroke-width="1.200"/><rect x="1411" y="42" width="6" height="1.500" fill="#000"/><rect x="1413" y="39" width="6" height="1.500" fill="#000"/><path d="M1426.500 38.500l7 7M1433.500 38.500l-7 7" stroke="#000" stroke-width="1.400"/><path d="M102 204h5l-2.500-3z" fill="#4f8389"/><path d="M118.500 199.500l4 4M122.500 199.500l-4 4" stroke="#000" stroke-width="1.700"/><g transform="translate(20 230)" ><path d="M.5 14v-9.500h4l1.500 1.500h6v3" fill="#fff" stroke="#000"/><path d="M.5 14.300l3.500-6h11.500l-4 6z" fill="#f0f000" stroke="#000"/><path d="M8.500 3.500c1.500-3 4.500-3 6-.5" fill="none" stroke="#000"/><path d="M15.800 .5v4h-4z" fill="#000"/></g><g transform="translate(46.5 230)" ><path d="M1 1.500h12.500v12.500h-11l-1.500-1.500z" fill="#d8dcdc" stroke="#505858"/><rect x="3" y="2" width="8.500" height="6" fill="#f4f080"/><path d="M3 6l4-4M5 8l6-6M8.500 8l3-3" stroke="#fff" stroke-width=".8"/><rect x="4.500" y="9.500" width="6" height="4.500" fill="#808080" stroke="#000" stroke-width=".8"/><rect x="6" y="10.500" width="2" height="3" fill="#e8e8e8"/><rect x="12" y="2" width="1" height="2" fill="#e00000"/></g><g transform="translate(73 230)" ><rect x=".5" y="5" width="10" height="9" fill="#fff" stroke="#000" stroke-width="1.100"/><rect x=".5" y="5" width="10" height="2" fill="#1020a0"/><path d="M2.500 9.500h6M2.500 11.500h6" stroke="#000"/><path d="M13.500 5q0-3-3-3.500M10 1v2.500M10 1h2.500" fill="none" stroke="#a01010" stroke-width="1.100"/></g><g transform="translate(99 230)" ><rect x="5" y="2" width="8" height="12" fill="#101090"/><text x="0" y="12.500" font-size="12" fill="#000">T</text><text x="5.500" y="12.500" font-size="12" fill="#fff">e</text></g><g transform="translate(18.5 255.5)" ><rect x=".5" y="2" width="10.500" height="11" rx="1.500" fill="#fff" stroke="#000" stroke-width="1"/><path d="M3.500 2v-1.500h4.500v1.500" fill="#fff" stroke="#404040" stroke-width=".8"/><path d="M2.500 7.500l2.500 3 5-7" fill="none" stroke="#000" stroke-width="1.400"/></g><g transform="translate(18.5 291.5)" ><rect x=".5" y="2" width="10.500" height="11" rx="1.500" fill="#fff" stroke="#000" stroke-width="1"/><path d="M3.500 2v-1.500h4.500v1.500" fill="#fff" stroke="#404040" stroke-width=".8"/><path d="M2.500 7.500l2.500 3 5-7" fill="none" stroke="#000" stroke-width="1.400"/></g><path d="M24.500 271v10h10M24.500 307v10h10M12 262.500h6M12 298.500h6" stroke="#a0a0a0" stroke-dasharray="1 1" fill="none" shape-rendering="crispEdges"/><path d="M22.500 738.500v7l-4-3.500zM107.500 738.500v7l4-3.500z" fill="#404040"/><path d="M1421.500 207h8l-4-4.500zM1421.500 763h8l-4 4.500z" fill="#303030"/><path d="M5.500 813.500l5 5M10.500 813.500l-5 5" stroke="#000" stroke-width="1.700"/><path d="M7 829v6l3.500-3z" fill="#4f8389"/><rect x="1383.500" y="856" width="4.500" height="12" fill="#10e020"/><path d="M1383.0 868v-12.500h5" fill="none" stroke="#666" stroke-width=".8"/><path d="M1391.400 868v-12h5" fill="none" stroke="#777" stroke-width="1.300"/><rect x="1392.100" y="857" width="4" height="11" fill="#d8d8d0" opacity=".6"/><path d="M1399.300 868v-12h5" fill="none" stroke="#777" stroke-width="1.300"/><rect x="1400.0" y="857" width="4" height="11" fill="#d8d8d0" opacity=".6"/><path d="M1407.200 868v-12h5" fill="none" stroke="#777" stroke-width="1.300"/><rect x="1407.900" y="857" width="4" height="11" fill="#d8d8d0" opacity=".6"/><path d="M1415.100 868v-12h5" fill="none" stroke="#777" stroke-width="1.300"/><rect x="1415.800" y="857" width="4" height="11" fill="#d8d8d0" opacity=".6"/><path d="M1423.0 868v-12h5" fill="none" stroke="#777" stroke-width="1.300"/><rect x="1423.700" y="857" width="4" height="11" fill="#d8d8d0" opacity=".6"/><rect x="1430.900" y="856" width="4.500" height="12" fill="#10e020"/><path d="M1430.400 868v-12.500h5" fill="none" stroke="#666" stroke-width=".8"/><radialGradient id="orb" cx=".45" cy=".35" r=".7"><stop offset="0" stop-color="#78c0d8"/><stop offset=".5" stop-color="#2868a0"/><stop offset="1" stop-color="#0c2850"/></radialGradient><circle cx="30.500" cy="888.500" r="17.500" fill="url(#orb)" stroke="#0a3040" stroke-width="1.500"/><path d="M21 880q4-2 8 0l-1.500 7q-4-1.500-8 0z" fill="#e85030"/><path d="M31 880.500q4 2 8-.5l-1.500 7q-4 2-8 0z" fill="#70c040"/><path d="M19 889.500q4-1.500 8 0l-1.500 7q-4-1.500-8 0z" fill="#3090e0"/><path d="M29 890q4 2 8 0l-1.500 7q-4 2-8 0z" fill="#f0c020"/><g transform="translate(71 876)" ><text x="-.5" y="15" font-size="26" font-weight="bold" fill="#3a90f0" stroke="#1050b0" stroke-width=".5">e</text><ellipse cx="7.500" cy="8" rx="8.500" ry="3.200" fill="none" stroke="#e8b020" stroke-width="1.500" transform="rotate(-35 7.500 8)"/></g><g transform="translate(170.5 876)" ><text x="-.5" y="15" font-size="26" font-weight="bold" fill="#3a90f0" stroke="#1050b0" stroke-width=".5">e</text><ellipse cx="7.500" cy="8" rx="8.500" ry="3.200" fill="none" stroke="#e8b020" stroke-width="1.500" transform="rotate(-35 7.500 8)"/></g><g transform="translate(93 877)" ><rect x="1" y="1" width="12" height="13" rx="2" fill="#e8f0ff" stroke="#1848c0" stroke-width="1.500"/><path d="M4 5h6M4 8h5M4 11h4" stroke="#1848c0"/><circle cx="12.500" cy="3.500" r="1.500" fill="#e04020"/></g><g transform="translate(116.5 877)" ><path d="M7.500 1l7 3.500v6.500l-7 4-7-4v-6.500z" fill="#f0a020" stroke="#b06010" stroke-width=".8"/><path d="M.5 4.500l7 3.500 7-3.500M7.500 8v7" stroke="#fff0a0" fill="none" stroke-width="1.200"/><path d="M4 2.500l7 4v3" stroke="#e04010" fill="none" stroke-width="1.500"/></g><path d="M146 881l3.500 3.500-3.500 3.500" fill="none" stroke="#fff" stroke-width="1.600"/><g transform="translate(330 878)" ><path d="M.5 3.500q0-2 2-2h3l1.500 2h6q2 0 2 2v6q0 2-2 2h-10.500q-2 0-2-2z" fill="#f0d060" stroke="#a07818" stroke-width=".9"/><path d="M.8 7h14" stroke="#fff0b0"/></g><g transform="translate(1278 879)" ><rect x=".5" y="3.500" width="14" height="8" fill="#e8e8e8" stroke="#303030" stroke-width=".9"/><path d="M2 6h11M2 8h11M3 10h9" stroke="#505050" stroke-dasharray="1 1"/></g><g transform="translate(1301 877)" ><path d="M2 14l7-8" stroke="#303030" stroke-width="2"/><ellipse cx="11" cy="4" rx="3" ry="4" transform="rotate(40 11 4)" fill="#c8c8c8" stroke="#303030"/></g><path d="M1337.500 880.500l-4 4 4 4" fill="none" stroke="#fff" stroke-width="2"/><g transform="translate(1344 876)" ><ellipse cx="8" cy="10.500" rx="6.500" ry="6" fill="#101010"/><ellipse cx="8" cy="11.500" rx="4" ry="4.200" fill="#fff"/><circle cx="8" cy="4.500" r="4" fill="#101010"/><path d="M5.500 6h5l-2.500 2.200z" fill="#f0a000"/><path d="M2 8.500q6 3 12 0l-.5 2.500q-5.500 2.500-11 0z" fill="#e02020"/><ellipse cx="4.500" cy="16" rx="3" ry="1.200" fill="#f0a000"/><ellipse cx="11.500" cy="16" rx="3" ry="1.200" fill="#f0a000"/></g><g transform="translate(1364 877)" ><path d="M.5 8q0-7.500 8-7.500t8 7.500q-2.700-2-5.300 0-2.700-2-5.400 0-2.600-2-5.300 0z" fill="#20b040" stroke="#106020" stroke-width=".7"/><path d="M8.500 1v13q0 1.500-2 1.500" fill="none" stroke="#d0d0d0" stroke-width="1.100"/></g><g transform="translate(1380 876)" ><rect x="5" y="1" width="9" height="7.500" fill="#70a8f0" stroke="#e8f0ff"/><rect x="1" y="7" width="9" height="7.500" fill="#4080e0" stroke="#e8f0ff"/><path d="M3 16.500h5M11 10.500h4" stroke="#d0d8e8" stroke-width="1.500"/></g></g>
</svg></body></html>
